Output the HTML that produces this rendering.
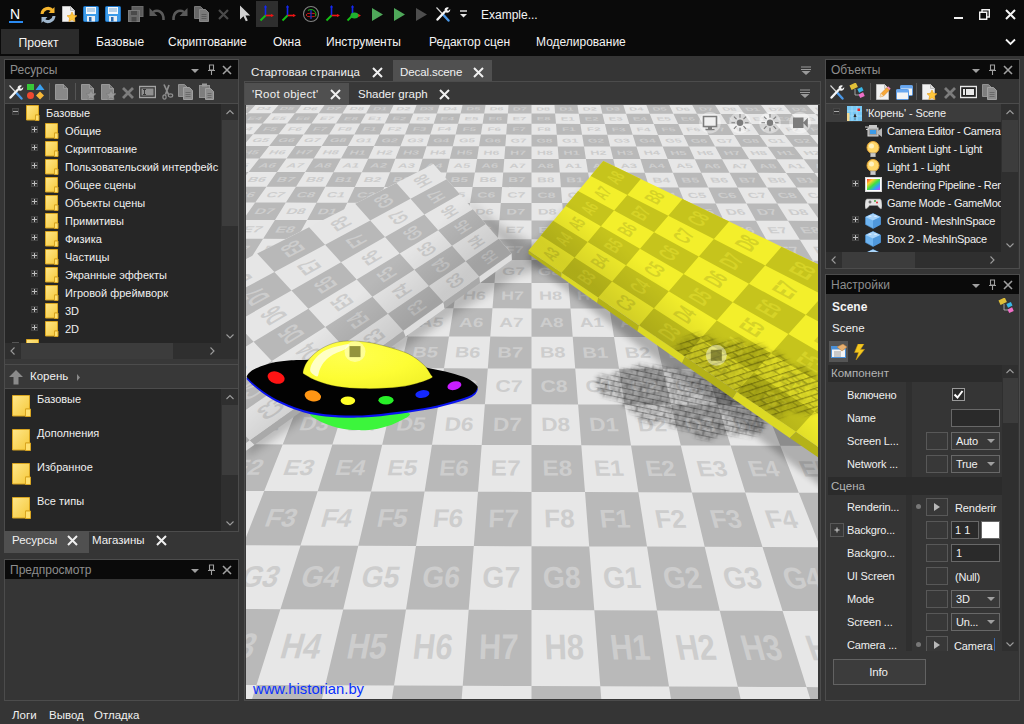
<!DOCTYPE html>
<html lang="ru"><head><meta charset="utf-8"><title>Example</title>
<style>
*{box-sizing:border-box;margin:0;padding:0}
html,body{width:1024px;height:724px;overflow:hidden;background:#353535}
body{font-family:"Liberation Sans",sans-serif;font-size:11px;color:#f0f0f0;position:relative}
.a{position:absolute}
.t{position:absolute;white-space:nowrap;line-height:1.15}
</style></head><body>
<svg width="0" height="0" style="position:absolute"><defs>
<linearGradient id="gf" x1="0" y1="0" x2="1" y2="1"><stop offset="0" stop-color="#ffe78a"/><stop offset="1" stop-color="#f5c83a"/></linearGradient>
<g id="folder"><path d="M0.5 0.5h12v9.5h-3v5h-9z" fill="url(#gf)" stroke="#d9a520" stroke-width="1"/><path d="M9.5 10h3.5v5.5h-3.5z" fill="#ffe070" stroke="#d9a520" stroke-width="1"/></g>
<g id="folderL"><path d="M0.5 0.5h17v13.5h-4v7h-13z" fill="url(#gf)" stroke="#d9a520"/><path d="M13.5 14h5v7.500h-5z" fill="#ffe070" stroke="#d9a520"/></g>
<g id="tx"><path d="M1 1l9 9M10 1l-9 9" stroke="#f0f0f0" stroke-width="2" fill="none"/></g>
<g id="hx"><path d="M1 1l8 8M9 1l-8 8" stroke="#a0a0a0" stroke-width="1.6" fill="none"/></g>
<g id="hpin"><path d="M2.500 1h4v5h-4zM1 6.500h7M4.500 6.500v4.500" stroke="#a0a0a0" stroke-width="1.1" fill="none"/></g>
<g id="hdd"><path d="M0 0h8l-4 4z" fill="#a0a0a0"/></g>
<g id="wrench"><path d="M1.500 1.500l7 7.500" stroke="#d8d8d8" stroke-width="1.100"/><path d="M8.500 9l5 5.500" stroke="#4a98e8" stroke-width="2.400" stroke-linecap="round"/><path d="M2.500 13.500l7.500-8" stroke="#f4f4f4" stroke-width="2.400" stroke-linecap="round"/><path d="M9.500 3.500a3 3 0 0 1 4.500-1.800l-2 2 1 1.300 2.200-1.700a3 3 0 0 1-4 3.300z" fill="#f4f4f4"/></g>
<g id="plus"><rect x="0.500" y="0.500" width="6" height="6" fill="#333" stroke="#464646"/><path d="M1 3.500h5M3.500 1v5" stroke="#bdbdbd" stroke-width="1"/></g>
<g id="minus"><rect x="0.500" y="0.500" width="6" height="6" fill="#333" stroke="#464646"/><path d="M1 3.500h5" stroke="#a8a8a8" stroke-width="1"/></g>
<g id="chevU"><path d="M1.500 6l3.500-3.500 3.500 3.500" stroke="#9c9c9c" stroke-width="1.100" fill="none"/></g>
<g id="chevD"><path d="M1.500 2.500l3.500 3.500 3.500-3.500" stroke="#9c9c9c" stroke-width="1.100" fill="none"/></g>
<g id="chevL"><path d="M5.500 1.500l-3.500 3.500 3.500 3.500" stroke="#9c9c9c" stroke-width="1.100" fill="none"/></g>
<g id="chevR"><path d="M2.500 1.500l3.500 3.500-3.500 3.500" stroke="#9c9c9c" stroke-width="1.100" fill="none"/></g>
<g id="doc"><path d="M1.500 0.500h8l4 4v11h-12z" fill="#f2f2f2" stroke="#bdbdbd"/><path d="M9.500 0.500v4h4" fill="#dcdcdc" stroke="#bdbdbd"/></g>
<g id="docg"><path d="M1.500 0.500h8l4 4v11h-12z" fill="#888" stroke="#989898"/><path d="M9.500 0.500v4h4" fill="#747474" stroke="#989898"/></g>
<g id="star"><path d="M5 0l1.500 3.300 3.500 0.400-2.600 2.400 0.700 3.500-3.100-1.800-3.100 1.800 0.700-3.500-2.600-2.400 3.500-0.400z" fill="#ffc83c" stroke="#e69a18" stroke-width="0.600"/></g>
<g id="starg"><path d="M5 0l1.500 3.300 3.500 0.400-2.600 2.400 0.700 3.500-3.100-1.800-3.100 1.800 0.700-3.500-2.600-2.400 3.500-0.400z" fill="#9a9a9a" stroke="#7a7a7a" stroke-width="0.600"/></g>
<g id="save"><rect x="0.500" y="0.500" width="15" height="15" rx="1" fill="#3c9be8" stroke="#1f74c4"/><rect x="3" y="1" width="10" height="7" fill="#f4f8fc"/><path d="M4 3h8M4 5h8" stroke="#7aa8d0" stroke-width="1"/><rect x="4" y="10" width="8" height="5.500" fill="#e8eef4"/><rect x="6" y="11" width="2.500" height="4.500" fill="#2a6cb0"/></g>
<g id="copyg"><path d="M0.500 0.500h6l3 3v9h-9z" fill="#7e7e7e" stroke="#929292"/><path d="M5.500 3.500h6l3 3v9h-9z" fill="#8c8c8c" stroke="#a0a0a0"/><path d="M7.500 8.500h5M7.500 10.500h5M7.500 12.500h5" stroke="#6a6a6a"/></g><g id="copyd"><path d="M0.500 0.500h6l3 3v9h-9z" fill="#666" stroke="#777"/><path d="M5.500 3.500h6l3 3v9h-9z" fill="#7a7a7a" stroke="#888"/><path d="M7.500 8.500h5M7.500 10.500h5M7.500 12.500h5" stroke="#5a5a5a"/></g>
<g id="xg"><path d="M2 2l10 10M12 2l-10 10" stroke="#7c7c7c" stroke-width="2.800"/></g>
<g id="rename"><rect x="0.500" y="2.500" width="16" height="11" fill="#222" stroke="#e8e8e8" stroke-width="1.400"/><rect x="3" y="5" width="11" height="6" fill="#e8e8e8"/><path d="M4 4.500h3M5.500 4.500v7M4 11.500h3" stroke="#222" stroke-width="1"/></g>
<g id="renameg"><rect x="0.500" y="2.500" width="16" height="11" fill="#3a3a3a" stroke="#a4a4a4" stroke-width="1.400"/><rect x="2.500" y="4.500" width="12" height="7" fill="#909090"/><path d="M4 5.500h3M5.500 5.500v5M4 10.500h3" stroke="#3a3a3a" stroke-width="1"/></g>
<g id="axes"><path d="M6.500 11V1" stroke="#1428f0" stroke-width="1.600"/><path d="M6.500 10.500h7" stroke="#f01414" stroke-width="1.600"/><path d="M6.500 10.500l-5 5" stroke="#14be14" stroke-width="2"/><path d="M15 10.500l-3-1.600v3.200z" fill="#f01414"/><path d="M6.500 0l-1.500 2.600h3z" fill="#1428f0"/></g>
<g id="play"><path d="M0 0l11 6.500-11 6.500z"/></g>
<g id="bulb"><circle cx="8" cy="6.500" r="6" fill="#ffd76a" stroke="#e8a838"/><circle cx="6.500" cy="5" r="2.500" fill="#fff2c0"/><rect x="5.500" y="12" width="5" height="4" fill="#c8c8c8" stroke="#8a8a8a" stroke-width="0.600"/></g>
<g id="cube"><path d="M8 0.500l7.500 3.500v7.500l-7.500 4-7.500-4v-7.500z" fill="#6eb4f0" stroke="#4a8ed0" stroke-width="0.600"/><path d="M8 0.500l7.500 3.500-7.500 3.500-7.500-3.500z" fill="#a8d4fa"/><path d="M8 7.500v8l7.500-4v-7.500z" fill="#4f98dc"/><ellipse cx="5" cy="3.300" rx="1.600" ry="0.800" fill="#d8ecff"/><ellipse cx="10.500" cy="3.300" rx="1.600" ry="0.800" fill="#d8ecff"/></g>
<g id="cam"><rect x="3" y="5" width="10" height="8" fill="#9a9a9a" stroke="#d8d8d8"/><rect x="5" y="7" width="6" height="4" fill="#3c9be8"/><path d="M13 8l4-3v9l-4-3z" fill="#b8b8b8"/><path d="M0 4h4M1 6.500h2" stroke="#d0d0d0"/><rect x="4" y="2" width="8" height="3" fill="#c8c8c8"/></g>
<g id="scene"><rect x="0" y="0" width="15" height="15" fill="#78c8f4"/><path d="M5 0v15M10 0v15M0 5h15M0 10h15" stroke="#a8dcf8" stroke-width="0.800"/><rect x="0" y="7" width="2.500" height="8" fill="#f4d890"/><rect x="10.500" y="2.500" width="2.500" height="2.500" fill="#f02020"/><path d="M6.500 11l1.500-3.500 1.500 3.500z" fill="#111"/><path d="M8 8v6" stroke="#555" stroke-width="0.700"/></g>
<g id="pipe"><rect x="0.500" y="0.500" width="16" height="14" fill="#fff" stroke="#d8d8d8"/><rect x="2" y="2" width="13" height="11" fill="url(#rb)"/></g>
<linearGradient id="rb" x1="0" y1="0" x2="1" y2="1"><stop offset="0" stop-color="#ff3030"/><stop offset="0.250" stop-color="#ffd030"/><stop offset="0.500" stop-color="#40e040"/><stop offset="0.750" stop-color="#30a0ff"/><stop offset="1" stop-color="#d040ff"/></linearGradient>
<g id="pad"><path d="M2 4h13c2 0 2.500 8 1.500 9.500-1 1-3-1.500-4-3h-8c-1 1.500-3 4-4 3C-0.500 12 0 4 2 4z" fill="#e4e4e4" stroke="#9a9a9a" stroke-width="0.600"/><circle cx="12" cy="7.500" r="1" fill="#e03030"/><circle cx="10" cy="6" r="0.900" fill="#30a030"/><path d="M3.500 7h3M5 5.500v3" stroke="#555" stroke-width="1.100"/></g>
<g id="shapes"><rect x="0" y="0" width="7" height="6" fill="#38c838"/><path d="M13 0l4.500 6h-9z" fill="#38a0f0"/><circle cx="3.500" cy="11.500" r="3.500" fill="#f04830"/><path d="M13 7.500l4 4-4 4-4-4z" fill="#f8b838"/></g>
<g id="link"><rect x="1" y="1" width="7" height="5" fill="#e0c038" transform="rotate(-25 4 3)"/><rect x="9" y="5" width="5" height="4" fill="#38b8e8" transform="rotate(-25 11 7)"/><rect x="10" y="10.500" width="5" height="4" fill="#f070c8" transform="rotate(-25 12 12)"/><path d="M6 6v6h4" stroke="#bbb" stroke-width="0.800" fill="none"/></g>
<g id="pencil"><path d="M6 13l1-3.500 6-6 2.500 2.500-6 6z" fill="#f8a838" stroke="#c87818" stroke-width="0.500"/><path d="M13 3.500l1.200-1.200 2.500 2.500-1.200 1.200z" fill="#f088b8"/><path d="M6 13l1-3.500 2.500 2.500z" fill="#f4e0c0"/></g>
<g id="wins"><rect x="4.500" y="0.500" width="12" height="10" rx="1" fill="#f4f4f4" stroke="#5a98e0"/><rect x="4.500" y="0.500" width="12" height="3" fill="#6aa8f0"/><rect x="0.500" y="4.500" width="12" height="10" rx="1" fill="#f4f4f4" stroke="#5a98e0"/><rect x="0.500" y="4.500" width="12" height="3" fill="#6aa8f0"/></g>
</defs></svg><div class="a" style="left:0px;top:0px;width:1024px;height:56px;background:#0a0a0a;"></div><div class="a" style="left:1px;top:29px;width:78px;height:25px;background:#2b2b2b;"></div><div class="t" style="left:-1.5px;top:35.5px;font-size:12.2px;color:#f4f4f4;width:80px;text-align:center">Проект</div><div class="t" style="left:96px;top:36px;font-size:12px;color:#f4f4f4;">Базовые</div><div class="t" style="left:168px;top:36px;font-size:12px;color:#f4f4f4;">Скриптование</div><div class="t" style="left:273px;top:36px;font-size:12px;color:#f4f4f4;">Окна</div><div class="t" style="left:326px;top:36px;font-size:12px;color:#f4f4f4;">Инструменты</div><div class="t" style="left:429px;top:36px;font-size:12px;color:#f4f4f4;">Редактор сцен</div><div class="t" style="left:536px;top:36px;font-size:12px;color:#f4f4f4;">Моделирование</div><svg class="a" style="left:1005px;top:38px" width="11" height="8" viewBox="0 0 11 8"><path d="M1 1.500l4.500 4.500 4.500-4.500" stroke="#f4f4f4" stroke-width="1.800" fill="none"/></svg><div class="t" style="left:10px;top:6px;font-size:14px;color:#ffffff;font-weight:normal">N</div><div class="a" style="left:9px;top:21px;width:14px;height:1.5px;background:#2a8af0;"></div><svg class="a" style="left:39px;top:6px" width="18" height="18" viewBox="0 0 18 18"><path d="M3 8a6 6 0 0 1 10.500-3.500" stroke="#f5b52e" stroke-width="3" fill="none"/><path d="M15.500 1v6h-6z" fill="#f5b52e"/><path d="M15 10a6 6 0 0 1-10.500 3.500" stroke="#9fb6cc" stroke-width="3" fill="none"/><path d="M2.500 17v-6h6z" fill="#9fb6cc"/></svg><svg class="a" style="left:61px;top:6px;" width="14" height="16" viewBox="0 0 14 16"><use href="#doc"/></svg><svg class="a" style="left:67px;top:12px;" width="10" height="10" viewBox="0 0 10 10"><use href="#star"/></svg><svg class="a" style="left:83px;top:6px;" width="16" height="16" viewBox="0 0 16 16"><use href="#save"/></svg><svg class="a" style="left:105px;top:6px;" width="16" height="16" viewBox="0 0 16 16"><use href="#save"/></svg><svg class="a" style="left:128px;top:6px" width="16" height="16" viewBox="0 0 16 16"><rect x="4" y="0.500" width="11" height="10" fill="#5c5c5c" stroke="#6c6c6c"/><rect x="0.500" y="4.500" width="11" height="11" fill="#6a6a6a" stroke="#7a7a7a"/><rect x="3" y="5" width="6" height="4" fill="#4a4a4a"/><rect x="3.500" y="11" width="5" height="4.500" fill="#4a4a4a"/></svg><svg class="a" style="left:149px;top:6px" width="17" height="16" viewBox="0 0 17 16"><path d="M4 6c5-3 11 0 10.500 8" stroke="#5a5a5a" stroke-width="2.600" fill="none"/><path d="M0.500 2v8h8z" fill="#5a5a5a"/></svg><svg class="a" style="left:171px;top:6px" width="17" height="16" viewBox="0 0 17 16"><path d="M13 6c-5-3-11 0-10.500 8" stroke="#5a5a5a" stroke-width="2.600" fill="none"/><path d="M16.500 2v8h-8z" fill="#5a5a5a"/></svg><svg class="a" style="left:194px;top:6px;" width="15" height="16" viewBox="0 0 15 16"><use href="#copyd"/></svg><svg class="a" style="left:217px;top:8px" width="13" height="13" viewBox="0 0 13 13"><path d="M2 2l9 9M11 2l-9 9" stroke="#4a4a4a" stroke-width="2.200"/></svg><svg class="a" style="left:239px;top:5px" width="12" height="17" viewBox="0 0 12 17"><path d="M1 0.500v14l3.500-3.200 2.300 5 2-0.900-2.300-4.900h4.700z" fill="#d0d0d0"/></svg><div class="a" style="left:256px;top:1px;width:22px;height:26px;background:#2e2e2e;"></div><svg class="a" style="left:259px;top:5px;" width="16" height="17" viewBox="0 0 16 17"><use href="#axes"/></svg><svg class="a" style="left:281px;top:5px;" width="16" height="17" viewBox="0 0 16 17"><use href="#axes"/></svg><svg class="a" style="left:302px;top:5px" width="18" height="18" viewBox="0 0 18 18"><circle cx="9" cy="9" r="7.500" stroke="#808080" stroke-width="1.100" fill="none"/><ellipse cx="9" cy="10" rx="5" ry="1.800" stroke="#c01818" stroke-width="1" fill="none"/><path d="M9 4v10" stroke="#1830d0" stroke-width="1.200"/><path d="M6 5.500a5 5 0 0 1 7.500 6" stroke="#18a018" stroke-width="1.100" fill="none"/></svg><svg class="a" style="left:325px;top:5px;" width="16" height="17" viewBox="0 0 16 17"><use href="#axes"/></svg><svg class="a" style="left:346px;top:5px;" width="16" height="17" viewBox="0 0 16 17"><use href="#axes"/></svg><svg class="a" style="left:350px;top:12px" width="9" height="7" viewBox="0 0 9 7"><ellipse cx="4.500" cy="3.500" rx="4" ry="3" fill="#20b030"/></svg><svg class="a" style="left:372px;top:8px;fill:#4fa85a" width="11" height="13" viewBox="0 0 11 13"><use href="#play"/></svg><svg class="a" style="left:394px;top:8px;fill:#4fa85a" width="11" height="13" viewBox="0 0 11 13"><use href="#play"/></svg><svg class="a" style="left:416px;top:8px;fill:#4e4e4e" width="11" height="13" viewBox="0 0 11 13"><use href="#play"/></svg><svg class="a" style="left:435px;top:6px;" width="16" height="16" viewBox="0 0 16 16"><use href="#wrench"/></svg><svg class="a" style="left:460px;top:10px" width="7" height="8" viewBox="0 0 7 8"><path d="M0 1h7" stroke="#e8e8e8" stroke-width="1.400"/><path d="M0 4h7l-3.500 3.500z" fill="#e8e8e8"/></svg><div class="t" style="left:481px;top:9px;font-size:12px;color:#f4f4f4;">Example...</div><div class="a" style="left:954px;top:17px;width:9px;height:1.5px;background:#f0f0f0;"></div><svg class="a" style="left:979px;top:9px" width="11" height="11" viewBox="0 0 11 11"><path d="M0.700 3.200h7v7h-7zM3 3V0.700h7.300v7.300H8" stroke="#f0f0f0" stroke-width="1.400" fill="none"/></svg><svg class="a" style="left:1005px;top:9px" width="11" height="11" viewBox="0 0 11 11"><path d="M1 1l9 9M10 1l-9 9" stroke="#f4f4f4" stroke-width="2"/></svg><div class="a" style="left:4px;top:59px;width:235px;height:473px;border:1px solid #4c4c4c;background:#383838;"></div><div class="a" style="left:5px;top:60px;width:233px;height:19px;background:#0a0a0a;"></div><div class="t" style="left:10px;top:63.5px;font-size:12px;color:#8e8e8e;">Ресурсы</div><svg class="a" style="left:191px;top:68.5px;" width="8" height="4" viewBox="0 0 8 4"><use href="#hdd"/></svg><svg class="a" style="left:207px;top:63.5px;" width="9" height="12" viewBox="0 0 9 12"><use href="#hpin"/></svg><svg class="a" style="left:222px;top:64.5px;" width="10" height="10" viewBox="0 0 10 10"><use href="#hx"/></svg><svg class="a" style="left:8px;top:84px;" width="16" height="16" viewBox="0 0 16 16"><use href="#wrench"/></svg><svg class="a" style="left:27px;top:84px;" width="18" height="16" viewBox="0 0 18 16"><use href="#shapes"/></svg><div class="a" style="left:49px;top:83px;width:1px;height:17px;background:#555;"></div><svg class="a" style="left:54px;top:84px;" width="14" height="16" viewBox="0 0 14 16"><use href="#docg"/></svg><div class="a" style="left:75px;top:83px;width:1px;height:17px;background:#555;"></div><svg class="a" style="left:80px;top:84px;" width="14" height="16" viewBox="0 0 14 16"><use href="#docg"/></svg><svg class="a" style="left:86px;top:90px;" width="10" height="10" viewBox="0 0 10 10"><use href="#starg"/></svg><svg class="a" style="left:100px;top:84px;" width="14" height="16" viewBox="0 0 14 16"><use href="#docg"/></svg><svg class="a" style="left:106px;top:90px;" width="10" height="10" viewBox="0 0 10 10"><use href="#starg"/></svg><svg class="a" style="left:121px;top:86px;" width="14" height="14" viewBox="0 0 14 14"><use href="#xg"/></svg><svg class="a" style="left:139px;top:84px;" width="17" height="16" viewBox="0 0 17 16"><use href="#renameg"/></svg><svg class="a" style="left:160px;top:84px" width="14" height="16" viewBox="0 0 14 16"><path d="M4 0.500l4.500 10M9 1l-3.500 9.500" stroke="#8e8e8e" stroke-width="1.700"/><ellipse cx="4.500" cy="13" rx="1.600" ry="2.200" stroke="#8e8e8e" stroke-width="1.200" fill="none"/><ellipse cx="10.500" cy="11.500" rx="2.200" ry="1.600" stroke="#8e8e8e" stroke-width="1.200" fill="none"/></svg><svg class="a" style="left:178px;top:84px;" width="15" height="16" viewBox="0 0 15 16"><use href="#copyg"/></svg><svg class="a" style="left:199px;top:83px" width="16" height="17" viewBox="0 0 16 17"><rect x="0.500" y="2.500" width="10" height="12" fill="#7e7e7e" stroke="#929292"/><rect x="3" y="0.500" width="5" height="3" fill="#9a9a9a"/><path d="M6.500 5.500h5l3 3v8h-8z" fill="#8c8c8c" stroke="#a0a0a0"/><path d="M8.500 10.500h4M8.500 12.500h4M8.500 14.500h4" stroke="#6a6a6a"/></svg><div class="a" style="left:5px;top:103px;width:233px;height:1px;background:#4c4c4c;"></div><div class="a" style="left:5px;top:104px;width:216px;height:239px;background:#262626;"></div><svg class="a" style="left:12px;top:108px;" width="8" height="8" viewBox="0 0 8 8"><use href="#minus"/></svg><svg class="a" style="left:26px;top:105px;" width="14" height="16" viewBox="0 0 14 16"><use href="#folder"/></svg><div class="t" style="left:46px;top:107px;font-size:11px;color:#f0f0f0;">Базовые</div><svg class="a" style="left:31px;top:126px;" width="8" height="8" viewBox="0 0 8 8"><use href="#plus"/></svg><svg class="a" style="left:45px;top:123px;" width="14" height="16" viewBox="0 0 14 16"><use href="#folder"/></svg><div class="t" style="left:65px;top:125px;font-size:11px;color:#f0f0f0;">Общие</div><svg class="a" style="left:31px;top:144px;" width="8" height="8" viewBox="0 0 8 8"><use href="#plus"/></svg><svg class="a" style="left:45px;top:141px;" width="14" height="16" viewBox="0 0 14 16"><use href="#folder"/></svg><div class="t" style="left:65px;top:143px;font-size:11px;color:#f0f0f0;">Скриптование</div><svg class="a" style="left:31px;top:162px;" width="8" height="8" viewBox="0 0 8 8"><use href="#plus"/></svg><svg class="a" style="left:45px;top:159px;" width="14" height="16" viewBox="0 0 14 16"><use href="#folder"/></svg><div class="t" style="left:65px;top:161px;font-size:11px;color:#f0f0f0;">Пользовательский интерфейс</div><svg class="a" style="left:31px;top:180px;" width="8" height="8" viewBox="0 0 8 8"><use href="#plus"/></svg><svg class="a" style="left:45px;top:177px;" width="14" height="16" viewBox="0 0 14 16"><use href="#folder"/></svg><div class="t" style="left:65px;top:179px;font-size:11px;color:#f0f0f0;">Общее сцены</div><svg class="a" style="left:31px;top:198px;" width="8" height="8" viewBox="0 0 8 8"><use href="#plus"/></svg><svg class="a" style="left:45px;top:195px;" width="14" height="16" viewBox="0 0 14 16"><use href="#folder"/></svg><div class="t" style="left:65px;top:197px;font-size:11px;color:#f0f0f0;">Объекты сцены</div><svg class="a" style="left:31px;top:216px;" width="8" height="8" viewBox="0 0 8 8"><use href="#plus"/></svg><svg class="a" style="left:45px;top:213px;" width="14" height="16" viewBox="0 0 14 16"><use href="#folder"/></svg><div class="t" style="left:65px;top:215px;font-size:11px;color:#f0f0f0;">Примитивы</div><svg class="a" style="left:31px;top:234px;" width="8" height="8" viewBox="0 0 8 8"><use href="#plus"/></svg><svg class="a" style="left:45px;top:231px;" width="14" height="16" viewBox="0 0 14 16"><use href="#folder"/></svg><div class="t" style="left:65px;top:233px;font-size:11px;color:#f0f0f0;">Физика</div><svg class="a" style="left:31px;top:252px;" width="8" height="8" viewBox="0 0 8 8"><use href="#plus"/></svg><svg class="a" style="left:45px;top:249px;" width="14" height="16" viewBox="0 0 14 16"><use href="#folder"/></svg><div class="t" style="left:65px;top:251px;font-size:11px;color:#f0f0f0;">Частицы</div><svg class="a" style="left:31px;top:270px;" width="8" height="8" viewBox="0 0 8 8"><use href="#plus"/></svg><svg class="a" style="left:45px;top:267px;" width="14" height="16" viewBox="0 0 14 16"><use href="#folder"/></svg><div class="t" style="left:65px;top:269px;font-size:11px;color:#f0f0f0;">Экранные эффекты</div><svg class="a" style="left:31px;top:288px;" width="8" height="8" viewBox="0 0 8 8"><use href="#plus"/></svg><svg class="a" style="left:45px;top:285px;" width="14" height="16" viewBox="0 0 14 16"><use href="#folder"/></svg><div class="t" style="left:65px;top:287px;font-size:11px;color:#f0f0f0;">Игровой фреймворк</div><svg class="a" style="left:31px;top:306px;" width="8" height="8" viewBox="0 0 8 8"><use href="#plus"/></svg><svg class="a" style="left:45px;top:303px;" width="14" height="16" viewBox="0 0 14 16"><use href="#folder"/></svg><div class="t" style="left:65px;top:305px;font-size:11px;color:#f0f0f0;">3D</div><svg class="a" style="left:31px;top:324px;" width="8" height="8" viewBox="0 0 8 8"><use href="#plus"/></svg><svg class="a" style="left:45px;top:321px;" width="14" height="16" viewBox="0 0 14 16"><use href="#folder"/></svg><div class="t" style="left:65px;top:323px;font-size:11px;color:#f0f0f0;">2D</div><div class="a" style="left:26px;top:339px;width:14px;height:4px;overflow:hidden"><svg class="a" style="left:0px;top:0px;" width="14" height="16" viewBox="0 0 14 16"><use href="#folder"/></svg></div><div class="a" style="left:12px;top:342px;width:7px;height:1px;background:#555;"></div><div class="a" style="left:221px;top:104px;width:17px;height:255px;background:#2f2f2f;"></div><svg class="a" style="left:225px;top:108px;" width="10" height="8" viewBox="0 0 10 8"><use href="#chevU"/></svg><div class="a" style="left:222px;top:120px;width:16px;height:106px;background:#3c3c3c;"></div><svg class="a" style="left:225px;top:332px;" width="10" height="8" viewBox="0 0 10 8"><use href="#chevD"/></svg><div class="a" style="left:5px;top:343px;width:216px;height:16px;background:#2f2f2f;"></div><div class="a" style="left:21px;top:343px;width:152px;height:16px;background:#3c3c3c;"></div><svg class="a" style="left:9px;top:346px;" width="8" height="10" viewBox="0 0 8 10"><use href="#chevL"/></svg><svg class="a" style="left:208px;top:346px;" width="8" height="10" viewBox="0 0 8 10"><use href="#chevR"/></svg><div class="a" style="left:5px;top:364px;width:233px;height:1px;background:#4c4c4c;"></div><svg class="a" style="left:9px;top:370px" width="14" height="15" viewBox="0 0 14 15"><path d="M7 0l7 7h-4.500v7.500h-5v-7.500h-4.500z" fill="#8a8a8a"/></svg><div class="t" style="left:30px;top:370px;font-size:11.5px;color:#f0f0f0;">Корень</div><svg class="a" style="left:76px;top:374px" width="5" height="7" viewBox="0 0 5 7"><path d="M1 0l3 3.500-3 3.500z" fill="#8a8a8a"/></svg><div class="a" style="left:5px;top:388px;width:233px;height:1px;background:#4c4c4c;"></div><div class="a" style="left:5px;top:389px;width:216px;height:142px;background:#262626;"></div><svg class="a" style="left:12px;top:395px;" width="19" height="22" viewBox="0 0 19 22"><use href="#folderL"/></svg><div class="t" style="left:37px;top:393px;font-size:11px;color:#f0f0f0;">Базовые</div><svg class="a" style="left:12px;top:429px;" width="19" height="22" viewBox="0 0 19 22"><use href="#folderL"/></svg><div class="t" style="left:37px;top:427px;font-size:11px;color:#f0f0f0;">Дополнения</div><svg class="a" style="left:12px;top:463px;" width="19" height="22" viewBox="0 0 19 22"><use href="#folderL"/></svg><div class="t" style="left:37px;top:461px;font-size:11px;color:#f0f0f0;">Избранное</div><svg class="a" style="left:12px;top:497px;" width="19" height="22" viewBox="0 0 19 22"><use href="#folderL"/></svg><div class="t" style="left:37px;top:495px;font-size:11px;color:#f0f0f0;">Все типы</div><div class="a" style="left:221px;top:389px;width:17px;height:142px;background:#2f2f2f;"></div><svg class="a" style="left:225px;top:393px;" width="10" height="8" viewBox="0 0 10 8"><use href="#chevU"/></svg><div class="a" style="left:222px;top:405px;width:16px;height:70px;background:#3c3c3c;"></div><svg class="a" style="left:225px;top:519px;" width="10" height="8" viewBox="0 0 10 8"><use href="#chevD"/></svg><div class="a" style="left:4px;top:531px;width:85px;height:22px;background:#505050;"></div><div class="t" style="left:12px;top:534px;font-size:11.5px;color:#f0f0f0;">Ресурсы</div><svg class="a" style="left:67px;top:535px;" width="11" height="11" viewBox="0 0 11 11"><use href="#tx"/></svg><div class="t" style="left:92px;top:534px;font-size:11.5px;color:#f0f0f0;">Магазины</div><svg class="a" style="left:156px;top:535px;" width="11" height="11" viewBox="0 0 11 11"><use href="#tx"/></svg><div class="a" style="left:4px;top:559px;width:235px;height:142px;border:1px solid #4c4c4c;background:#353535;"></div><div class="a" style="left:5px;top:560px;width:233px;height:19px;background:#0a0a0a;"></div><div class="t" style="left:10px;top:563.5px;font-size:12px;color:#8e8e8e;">Предпросмотр</div><svg class="a" style="left:191px;top:568.5px;" width="8" height="4" viewBox="0 0 8 4"><use href="#hdd"/></svg><svg class="a" style="left:207px;top:563.5px;" width="9" height="12" viewBox="0 0 9 12"><use href="#hpin"/></svg><svg class="a" style="left:222px;top:564.5px;" width="10" height="10" viewBox="0 0 10 10"><use href="#hx"/></svg><div class="t" style="left:12px;top:709px;font-size:11.5px;color:#f0f0f0;">Логи</div><div class="t" style="left:49px;top:709px;font-size:11.5px;color:#f0f0f0;">Вывод</div><div class="t" style="left:94px;top:709px;font-size:11.5px;color:#f0f0f0;">Отладка</div><div class="t" style="left:251px;top:66px;font-size:11.5px;color:#f0f0f0;">Стартовая страница</div><svg class="a" style="left:372px;top:66.5px;" width="11" height="11" viewBox="0 0 11 11"><use href="#tx"/></svg><div class="a" style="left:393px;top:60px;width:99px;height:21px;background:#505050;"></div><div class="t" style="left:400px;top:66px;font-size:11.5px;color:#f0f0f0;letter-spacing:-0.1px">Decal.scene</div><svg class="a" style="left:473px;top:66.5px;" width="11" height="11" viewBox="0 0 11 11"><use href="#tx"/></svg><svg class="a" style="left:801px;top:66px" width="10" height="9" viewBox="0 0 10 9"><path d="M0 1h10M0 3.500h10" stroke="#9a9a9a" stroke-width="1.200"/><path d="M0.500 5h9l-4.500 4z" fill="#9a9a9a"/></svg><div class="a" style="left:244px;top:81px;width:577px;height:620px;border:1px solid #4c4c4c;background:#383838;"></div><div class="a" style="left:245px;top:83px;width:104px;height:21px;background:#505050;"></div><div class="t" style="left:252px;top:88px;font-size:11.5px;color:#f0f0f0;letter-spacing:0.3px">'Root object'</div><svg class="a" style="left:330px;top:89px;" width="11" height="11" viewBox="0 0 11 11"><use href="#tx"/></svg><div class="t" style="left:358px;top:88px;font-size:11.5px;color:#f0f0f0;">Shader graph</div><svg class="a" style="left:439px;top:89px;" width="11" height="11" viewBox="0 0 11 11"><use href="#tx"/></svg><svg class="a" style="left:800px;top:89px" width="10" height="9" viewBox="0 0 10 9"><path d="M0 1h10M0 3.500h10" stroke="#9a9a9a" stroke-width="1.200"/><path d="M0.500 5h9l-4.500 4z" fill="#9a9a9a"/></svg><div class="a" style="left:245px;top:104px;width:575px;height:1px;background:#555;"></div><svg width="1024" height="724" viewBox="0 0 1024 724" style="position:absolute;left:0;top:0">
<defs><clipPath id="vp"><rect x="246" y="105" width="572" height="594"/></clipPath>
<filter id="b6" x="-30%" y="-30%" width="160%" height="160%"><feGaussianBlur stdDeviation="6"/></filter>
<filter id="b4" x="-30%" y="-30%" width="160%" height="160%"><feGaussianBlur stdDeviation="4"/></filter>
<filter id="b3" x="-30%" y="-30%" width="160%" height="160%"><feGaussianBlur stdDeviation="3"/></filter>
<filter id="rag" x="-20%" y="-40%" width="140%" height="180%"><feTurbulence type="fractalNoise" baseFrequency="0.060" numOctaves="3" seed="5"/><feDisplacementMap in="SourceGraphic" scale="18" xChannelSelector="R" yChannelSelector="G"/><feGaussianBlur stdDeviation="2.200"/></filter><filter id="nz" x="0" y="0" width="100%" height="100%"><feTurbulence type="fractalNoise" baseFrequency="0.180" numOctaves="2" seed="8"/><feColorMatrix type="matrix" values="0 0 0 0 0 0 0 0 0 0 0 0 0 0 0 1.300 0 0 0 -0.450"/></filter><pattern id="brk" width="14" height="10" patternUnits="userSpaceOnUse"><path d="M0 0.500h14M0 5.500h14M3 0v5M10 5v5" stroke="#000" stroke-opacity="0.300" stroke-width="1" fill="none"/></pattern><pattern id="brk2" width="20" height="12" patternUnits="userSpaceOnUse"><path d="M0 0.500h20M0 6.500h20M4 0v6M14 6v6" stroke="#303000" stroke-opacity="0.400" stroke-width="1.200" fill="none"/></pattern><mask id="dm1" maskUnits="userSpaceOnUse" x="560" y="300" width="300" height="180"><path d="M600 382L640 372L700 380L762 418L750 432L700 428L650 412Z" stroke="#fff" stroke-width="14" stroke-linejoin="round" fill="#fff" filter="url(#rag)"/></mask><mask id="dm2" maskUnits="userSpaceOnUse" x="600" y="300" width="260" height="180"><path d="M672 352L700 338L760 352L818 380L818 405L780 412L720 385Z" stroke="#fff" stroke-width="10" stroke-linejoin="round" fill="#fff" filter="url(#rag)"/></mask><radialGradient id="domeg" cx="0.350" cy="0.300" r="0.800"><stop offset="0" stop-color="#ffff50"/><stop offset="0.600" stop-color="#fdfd34"/><stop offset="1" stop-color="#f2f22a"/></radialGradient>
</defs>
<style>.lb text{font-family:"Liberation Sans",sans-serif;font-weight:bold;font-size:47px;text-anchor:middle}</style>
<g clip-path="url(#vp)">
<rect x="246" y="105" width="572" height="594" fill="#e7e7e7"/>
<path fill="#b9b9b9" d="M227.5 776.7 303.5 777 325.2 685.2 256.5 685ZM379.5 777.4 455.5 777.7 462.7 685.8 394 685.5ZM531.5 778 607.5 778.3 600.3 686.3 531.5 686ZM683.5 778.6 759.5 779 737.8 686.8 669 686.5ZM835.5 779.3 911.5 779.6 875.3 687.3 806.5 687.1ZM187.7 684.7 256.5 685 280.4 609.2 217.7 609ZM325.2 685.2 394 685.5 406 609.6 343.2 609.4ZM462.7 685.8 531.5 686 531.5 610.1 468.7 609.8ZM600.3 686.3 669 686.5 657 610.5 594.3 610.3ZM737.8 686.8 806.5 687.1 782.6 610.9 719.8 610.7ZM280.4 609.2 343.2 609.4 358.3 545.7 300.5 545.5ZM406 609.6 468.7 609.8 473.8 546.1 416 545.9ZM531.5 610.1 594.3 610.3 589.2 546.4 531.5 546.3ZM657 610.5 719.8 610.7 704.7 546.8 647 546.6ZM782.6 610.9 845.3 611.2 820.2 547.2 762.5 547ZM242.8 545.3 300.5 545.5 317.7 491.3 264.2 491.1ZM358.3 545.7 416 545.9 424.6 491.6 371.1 491.5ZM473.8 546.1 531.5 546.3 531.5 491.9 478 491.8ZM589.2 546.4 647 546.6 638.4 492.2 585 492.1ZM704.7 546.8 762.5 547 745.3 492.6 691.9 492.4ZM820.2 547.2 877.9 547.4 852.3 492.9 798.8 492.7ZM210.7 491 264.2 491.1 282.7 444.4 232.9 444.3ZM317.7 491.3 371.1 491.5 382.2 444.7 332.4 444.5ZM424.6 491.6 478 491.8 481.7 445 432 444.8ZM531.5 491.9 585 492.1 581.3 445.2 531.5 445.1ZM638.4 492.2 691.9 492.4 680.8 445.5 631 445.4ZM745.3 492.6 798.8 492.7 780.3 445.8 730.6 445.6ZM183.1 444.1 232.9 444.3 252.2 403.6 205.6 403.5ZM282.7 444.4 332.4 444.5 345.3 403.8 298.7 403.7ZM382.2 444.7 432 444.8 438.4 404.1 391.8 403.9ZM481.7 445 531.5 445.1 531.5 404.3 484.9 404.2ZM581.3 445.2 631 445.4 624.6 404.5 578.1 404.4ZM680.8 445.5 730.6 445.6 717.7 404.8 671.2 404.7ZM780.3 445.8 830.1 445.9 810.8 405 764.3 404.9ZM252.2 403.6 298.7 403.7 312.8 367.9 269.1 367.8ZM345.3 403.8 391.8 403.9 400.3 368.2 356.6 368ZM438.4 404.1 484.9 404.2 487.8 368.4 444 368.3ZM531.5 404.3 578.1 404.4 575.2 368.6 531.5 368.5ZM624.6 404.5 671.2 404.7 662.7 368.8 619 368.7ZM717.7 404.8 764.3 404.9 750.2 369 706.4 368.9ZM810.8 405 857.4 405.1 837.6 369.2 793.9 369.1ZM225.4 367.7 269.1 367.8 284.1 336.2 242.9 336.1ZM312.8 367.9 356.6 368 366.6 336.4 325.3 336.3ZM400.3 368.2 444 368.3 449 336.5 407.8 336.4ZM487.8 368.4 531.5 368.5 531.5 336.7 490.3 336.6ZM575.2 368.6 619 368.7 614 336.9 572.7 336.8ZM662.7 368.8 706.4 368.9 696.4 337.1 655.2 337ZM750.2 369 793.9 369.1 778.9 337.3 737.7 337.2ZM201.7 336 242.9 336.1 258.5 307.8 219.5 307.8ZM284.1 336.2 325.3 336.3 336.5 308 297.5 307.9ZM366.6 336.4 407.8 336.4 414.5 308.2 375.5 308.1ZM449 336.5 490.3 336.6 492.5 308.3 453.5 308.3ZM531.5 336.7 572.7 336.8 570.5 308.5 531.5 308.4ZM614 336.9 655.2 337 648.5 308.7 609.5 308.6ZM696.4 337.1 737.7 337.2 726.5 308.8 687.5 308.8ZM778.9 337.3 820.1 337.4 804.5 309 765.5 308.9ZM258.5 307.8 297.5 307.9 309.5 282.6 272.5 282.5ZM336.5 308 375.5 308.1 383.5 282.7 346.5 282.6ZM414.5 308.2 453.5 308.3 457.5 282.9 420.5 282.8ZM492.5 308.3 531.5 308.4 531.5 283 494.5 283ZM570.5 308.5 609.5 308.6 605.5 283.2 568.5 283.1ZM648.5 308.7 687.5 308.8 679.5 283.3 642.5 283.3ZM726.5 308.8 765.5 308.9 753.5 283.5 716.5 283.4ZM804.5 309 843.5 309.1 827.5 283.6 790.5 283.6ZM235.5 282.4 272.5 282.5 285.2 259.6 250 259.6ZM309.5 282.6 346.5 282.6 355.5 259.8 320.3 259.7ZM383.5 282.7 420.5 282.8 425.9 259.9 390.7 259.8ZM457.5 282.9 494.5 283 496.3 260 461.1 260ZM531.5 283 568.5 283.1 566.7 260.2 531.5 260.1ZM605.5 283.2 642.5 283.3 637.1 260.3 601.9 260.2ZM679.5 283.3 716.5 283.4 707.5 260.5 672.3 260.4ZM753.5 283.5 790.5 283.6 777.8 260.6 742.7 260.5ZM827.5 283.6 864.5 283.7 848.2 260.7 813 260.7ZM214.8 259.5 250 259.6 263.1 238.8 229.5 238.8ZM285.2 259.6 320.3 259.7 330.2 238.9 296.6 238.9ZM355.5 259.8 390.7 259.8 397.3 239.1 363.7 239ZM425.9 259.9 461.1 260 464.4 239.2 430.8 239.1ZM496.3 260 531.5 260.1 531.5 239.3 497.9 239.3ZM566.7 260.2 601.9 260.2 598.6 239.4 565.1 239.4ZM637.1 260.3 672.3 260.4 665.7 239.6 632.2 239.5ZM707.5 260.5 742.7 260.5 732.8 239.7 699.3 239.6ZM777.8 260.6 813 260.7 799.9 239.8 766.4 239.8ZM263.1 238.8 296.6 238.9 307.1 220 275 219.9ZM330.2 238.9 363.7 239 371.2 220.1 339.1 220ZM397.3 239.1 430.8 239.1 435.3 220.2 403.3 220.2ZM464.4 239.2 497.9 239.3 499.4 220.3 467.4 220.3ZM531.5 239.3 565.1 239.4 563.6 220.4 531.5 220.4ZM598.6 239.4 632.2 239.5 627.7 220.6 595.6 220.5ZM665.7 239.6 699.3 239.6 691.8 220.7 659.7 220.6ZM732.8 239.7 766.4 239.8 755.9 220.8 723.9 220.7ZM799.9 239.8 833.5 239.9 820.1 220.9 788 220.8ZM242.9 219.9 275 219.9 285.9 202.6 255.2 202.6ZM307.1 220 339.1 220 347.3 202.7 316.6 202.7ZM371.2 220.1 403.3 220.2 408.7 202.9 378 202.8ZM435.3 220.2 467.4 220.3 470.1 203 439.4 202.9ZM499.4 220.3 531.5 220.4 531.5 203.1 500.8 203ZM563.6 220.4 595.6 220.5 592.9 203.2 562.2 203.1ZM627.7 220.6 659.7 220.6 654.3 203.3 623.6 203.2ZM691.8 220.7 723.9 220.7 715.7 203.4 685 203.3ZM755.9 220.8 788 220.8 777.1 203.5 746.4 203.4ZM820.1 220.9 852.1 221 838.5 203.6 807.8 203.5ZM224.5 202.5 255.2 202.6 266.5 186.7 237.1 186.7ZM285.9 202.6 316.6 202.7 325.4 186.8 296 186.8ZM347.3 202.7 378 202.8 384.3 186.9 354.8 186.9ZM408.7 202.9 439.4 202.9 443.2 187 413.7 187ZM470.1 203 500.8 203 502.1 187.1 472.6 187.1ZM531.5 203.1 562.2 203.1 560.9 187.2 531.5 187.2ZM592.9 203.2 623.6 203.2 619.8 187.3 590.4 187.2ZM654.3 203.3 685 203.3 678.7 187.4 649.3 187.3ZM715.7 203.4 746.4 203.4 737.6 187.5 708.2 187.4ZM777.1 203.5 807.8 203.5 796.5 187.6 767 187.5ZM207.6 186.6 237.1 186.7 248.6 172 220.3 172ZM266.5 186.7 296 186.8 305.2 172.1 276.9 172.1ZM325.4 186.8 354.8 186.9 361.8 172.2 333.5 172.2ZM384.3 186.9 413.7 187 418.3 172.3 390.1 172.3ZM443.2 187 472.6 187.1 474.9 172.4 446.6 172.4ZM502.1 187.1 531.5 187.2 531.5 172.5 503.2 172.4ZM560.9 187.2 590.4 187.2 588.1 172.6 559.8 172.5ZM619.8 187.3 649.3 187.3 644.7 172.7 616.4 172.6ZM678.7 187.4 708.2 187.4 701.2 172.8 672.9 172.7ZM737.6 187.5 767 187.5 757.8 172.8 729.5 172.8ZM796.5 187.6 825.9 187.6 814.4 172.9 786.1 172.9ZM248.6 172 276.9 172.1 286.5 158.6 259.3 158.5ZM305.2 172.1 333.5 172.2 341 158.6 313.7 158.6ZM361.8 172.2 390.1 172.3 395.4 158.7 368.2 158.7ZM418.3 172.3 446.6 172.4 449.8 158.8 422.6 158.8ZM474.9 172.4 503.2 172.4 504.3 158.9 477.1 158.9ZM531.5 172.5 559.8 172.5 558.7 159 531.5 158.9ZM588.1 172.6 616.4 172.6 613.2 159.1 585.9 159ZM644.7 172.7 672.9 172.7 667.6 159.1 640.4 159.1ZM701.2 172.8 729.5 172.8 722 159.2 694.8 159.2ZM757.8 172.8 786.1 172.9 776.5 159.3 749.3 159.3ZM814.4 172.9 842.7 173 830.9 159.4 803.7 159.3ZM232.1 158.5 259.3 158.5 269.2 146 243 145.9ZM286.5 158.6 313.7 158.6 321.7 146.1 295.4 146ZM341 158.6 368.2 158.7 374.1 146.1 347.9 146.1ZM395.4 158.7 422.6 158.8 426.6 146.2 400.4 146.2ZM449.8 158.8 477.1 158.9 479 146.3 452.8 146.3ZM504.3 158.9 531.5 158.9 531.5 146.4 505.3 146.3ZM558.7 159 585.9 159 584 146.4 557.7 146.4ZM613.2 159.1 640.4 159.1 636.4 146.5 610.2 146.5ZM667.6 159.1 694.8 159.2 688.9 146.6 662.6 146.6ZM722 159.2 749.3 159.3 741.3 146.7 715.1 146.6ZM776.5 159.3 803.7 159.3 793.8 146.7 767.6 146.7ZM216.7 145.9 243 145.9 253.1 134.3 227.8 134.3ZM269.2 146 295.4 146 303.7 134.4 278.4 134.3ZM321.7 146.1 347.9 146.1 354.3 134.4 329 134.4ZM374.1 146.1 400.4 146.2 405 134.5 379.6 134.5ZM426.6 146.2 452.8 146.3 455.6 134.6 430.3 134.5ZM479 146.3 505.3 146.3 506.2 134.6 480.9 134.6ZM531.5 146.4 557.7 146.4 556.8 134.7 531.5 134.7ZM584 146.4 610.2 146.5 607.4 134.8 582.1 134.8ZM636.4 146.5 662.6 146.6 658 134.9 632.7 134.8ZM688.9 146.6 715.1 146.6 708.7 134.9 683.4 134.9ZM741.3 146.7 767.6 146.7 759.3 135 734 135ZM793.8 146.7 820 146.8 809.9 135.1 784.6 135ZM253.1 134.3 278.4 134.3 287 123.5 262.5 123.4ZM303.7 134.4 329 134.4 335.9 123.5 311.4 123.5ZM354.3 134.4 379.6 134.5 384.8 123.6 360.3 123.6ZM405 134.5 430.3 134.5 433.7 123.7 409.2 123.6ZM455.6 134.6 480.9 134.6 482.6 123.7 458.1 123.7ZM506.2 134.6 531.5 134.7 531.5 123.8 507 123.8ZM556.8 134.7 582.1 134.8 580.4 123.9 556 123.8ZM607.4 134.8 632.7 134.8 629.3 123.9 604.9 123.9ZM658 134.9 683.4 134.9 678.2 124 653.8 124ZM708.7 134.9 734 135 727.1 124.1 702.7 124ZM759.3 135 784.6 135 776 124.1 751.6 124.1ZM809.9 135.1 835.2 135.1 824.9 124.2 800.5 124.2ZM238.1 123.4 262.5 123.4 271.4 113.3 247.7 113.2ZM287 123.5 311.4 123.5 318.7 113.3 295 113.3ZM335.9 123.5 360.3 123.6 366 113.4 342.3 113.4ZM384.8 123.6 409.2 123.6 413.3 113.5 389.6 113.4ZM433.7 123.7 458.1 123.7 460.6 113.5 436.9 113.5ZM482.6 123.7 507 123.8 507.9 113.6 484.2 113.5ZM531.5 123.8 556 123.8 555.1 113.6 531.5 113.6ZM580.4 123.9 604.9 123.9 602.4 113.7 578.8 113.7ZM629.3 123.9 653.8 124 649.7 113.8 626.1 113.7ZM678.2 124 702.7 124 697 113.8 673.4 113.8ZM727.1 124.1 751.6 124.1 744.3 113.9 720.7 113.9ZM776 124.1 800.5 124.2 791.6 114 768 113.9ZM824.9 124.2 849.4 124.2 838.9 114 815.3 114ZM224.1 113.2 247.7 113.2 256.7 103.7 233.8 103.7ZM271.4 113.3 295 113.3 302.5 103.8 279.6 103.8ZM318.7 113.3 342.3 113.4 348.3 103.8 325.4 103.8ZM366 113.4 389.6 113.4 394.1 103.9 371.2 103.9ZM413.3 113.5 436.9 113.5 439.9 104 417 103.9ZM460.6 113.5 484.2 113.5 485.7 104 462.8 104ZM507.9 113.6 531.5 113.6 531.5 104.1 508.6 104.1ZM555.1 113.6 578.8 113.7 577.3 104.1 554.4 104.1ZM602.4 113.7 626.1 113.7 623.1 104.2 600.2 104.2ZM649.7 113.8 673.4 113.8 668.9 104.3 646 104.2ZM697 113.8 720.7 113.9 714.7 104.3 691.8 104.3ZM744.3 113.9 768 113.9 760.5 104.4 737.6 104.3ZM791.6 114 815.3 114 806.3 104.4 783.4 104.4ZM256.7 103.7 279.6 103.8 287.4 94.8 265.2 94.8ZM302.5 103.8 325.4 103.8 331.8 94.9 309.6 94.9ZM348.3 103.8 371.2 103.9 376.2 94.9 354 94.9ZM394.1 103.9 417 103.9 420.5 95 398.3 95ZM439.9 104 462.8 104 464.9 95.1 442.7 95ZM485.7 104 508.6 104.1 509.3 95.1 487.1 95.1ZM531.5 104.1 554.4 104.1 553.7 95.2 531.5 95.1ZM577.3 104.1 600.2 104.2 598.1 95.2 575.9 95.2ZM623.1 104.2 646 104.2 642.5 95.3 620.3 95.2ZM668.9 104.3 691.8 104.3 686.8 95.3 664.7 95.3ZM714.7 104.3 737.6 104.3 731.2 95.4 709 95.4ZM760.5 104.4 783.4 104.4 775.6 95.4 753.4 95.4ZM806.3 104.4 829.2 104.5 820 95.5 797.8 95.5Z"/>
<g class="lb" fill="#cdcdcd"><text transform="matrix(0.7220 0.0029 -0.3256 0.9155 206.6 728.4)" y="17">A3</text><text transform="matrix(0.7220 0.0029 -0.2532 0.9161 278.8 728.7)" y="17">A4</text><text transform="matrix(0.7220 0.0029 -0.1809 0.9166 351.0 729.0)" y="17">A5</text><text transform="matrix(0.7220 0.0029 -0.1085 0.9172 423.2 729.3)" y="17">A6</text><text transform="matrix(0.7220 0.0029 -0.0362 0.9178 495.4 729.6)" y="17">A7</text><text transform="matrix(0.7220 0.0029 0.0362 0.9184 567.6 729.9)" y="17">A8</text><text transform="matrix(0.7220 0.0029 0.1085 0.9190 639.8 730.1)" y="17">A1</text><text transform="matrix(0.7220 0.0029 0.1809 0.9195 712.0 730.4)" y="17">A2</text><text transform="matrix(0.7220 0.0029 0.2532 0.9201 784.2 730.7)" y="17">A3</text><text transform="matrix(0.7220 0.0029 0.3256 0.9207 856.4 731.0)" y="17">A4</text><text transform="matrix(0.6563 0.0024 -0.2690 0.7565 236.2 645.2)" y="17">H3</text><text transform="matrix(0.6563 0.0024 -0.2092 0.7570 301.8 645.5)" y="17">H4</text><text transform="matrix(0.6563 0.0024 -0.1494 0.7574 367.4 645.7)" y="17">H5</text><text transform="matrix(0.6563 0.0024 -0.0897 0.7578 433.1 646.0)" y="17">H6</text><text transform="matrix(0.6563 0.0024 -0.0299 0.7583 498.7 646.2)" y="17">H7</text><text transform="matrix(0.6563 0.0024 0.0299 0.7587 564.3 646.4)" y="17">H8</text><text transform="matrix(0.6563 0.0024 0.0897 0.7591 629.9 646.7)" y="17">H1</text><text transform="matrix(0.6563 0.0024 0.1494 0.7596 695.6 646.9)" y="17">H2</text><text transform="matrix(0.6563 0.0024 0.2092 0.7600 761.2 647.1)" y="17">H3</text><text transform="matrix(0.6563 0.0024 0.2690 0.7604 826.8 647.4)" y="17">H4</text><text transform="matrix(0.6015 0.0020 -0.2259 0.6356 260.8 575.9)" y="17">G3</text><text transform="matrix(0.6015 0.0020 -0.1757 0.6360 321.0 576.1)" y="17">G4</text><text transform="matrix(0.6015 0.0020 -0.1255 0.6363 381.1 576.3)" y="17">G5</text><text transform="matrix(0.6015 0.0020 -0.0753 0.6366 441.3 576.5)" y="17">G6</text><text transform="matrix(0.6015 0.0020 -0.0251 0.6370 501.4 576.7)" y="17">G7</text><text transform="matrix(0.6015 0.0020 0.0251 0.6373 561.6 576.9)" y="17">G8</text><text transform="matrix(0.6015 0.0020 0.0753 0.6376 621.7 577.1)" y="17">G1</text><text transform="matrix(0.6015 0.0020 0.1255 0.6380 681.9 577.3)" y="17">G2</text><text transform="matrix(0.6015 0.0020 0.1757 0.6383 742.0 577.5)" y="17">G3</text><text transform="matrix(0.6015 0.0020 0.2259 0.6386 802.2 577.7)" y="17">G4</text><text transform="matrix(0.5552 0.0017 -0.2352 0.5413 226.1 517.1)" y="17">F2</text><text transform="matrix(0.5552 0.0017 -0.1925 0.5416 281.7 517.3)" y="17">F3</text><text transform="matrix(0.5552 0.0017 -0.1497 0.5418 337.2 517.5)" y="17">F4</text><text transform="matrix(0.5552 0.0017 -0.1069 0.5421 392.7 517.6)" y="17">F5</text><text transform="matrix(0.5552 0.0017 -0.0642 0.5424 448.2 517.8)" y="17">F6</text><text transform="matrix(0.5552 0.0017 -0.0214 0.5426 503.7 518.0)" y="17">F7</text><text transform="matrix(0.5552 0.0017 0.0214 0.5429 559.3 518.1)" y="17">F8</text><text transform="matrix(0.5552 0.0017 0.0642 0.5431 614.8 518.3)" y="17">F1</text><text transform="matrix(0.5552 0.0017 0.1069 0.5434 670.3 518.5)" y="17">F2</text><text transform="matrix(0.5552 0.0017 0.1497 0.5437 725.8 518.6)" y="17">F3</text><text transform="matrix(0.5552 0.0017 0.1925 0.5439 781.3 518.8)" y="17">F4</text><text transform="matrix(0.5552 0.0017 0.2352 0.5442 836.9 519.0)" y="17">F5</text><text transform="matrix(0.5155 0.0015 -0.2028 0.4667 248.0 466.9)" y="17">E2</text><text transform="matrix(0.5155 0.0015 -0.1659 0.4669 299.5 467.0)" y="17">E3</text><text transform="matrix(0.5155 0.0015 -0.1290 0.4672 351.1 467.2)" y="17">E4</text><text transform="matrix(0.5155 0.0015 -0.0922 0.4674 402.6 467.3)" y="17">E5</text><text transform="matrix(0.5155 0.0015 -0.0553 0.4676 454.2 467.5)" y="17">E6</text><text transform="matrix(0.5155 0.0015 -0.0184 0.4678 505.7 467.6)" y="17">E7</text><text transform="matrix(0.5155 0.0015 0.0184 0.4680 557.3 467.7)" y="17">E8</text><text transform="matrix(0.5155 0.0015 0.0553 0.4682 608.8 467.9)" y="17">E1</text><text transform="matrix(0.5155 0.0015 0.0922 0.4684 660.4 468.0)" y="17">E2</text><text transform="matrix(0.5155 0.0015 0.1290 0.4686 711.9 468.2)" y="17">E3</text><text transform="matrix(0.5155 0.0015 0.1659 0.4688 763.5 468.3)" y="17">E4</text><text transform="matrix(0.5155 0.0015 0.2028 0.4690 815.0 468.5)" y="17">E5</text><text transform="matrix(0.4811 0.0013 -0.2087 0.4064 218.8 423.2)" y="17">D1</text><text transform="matrix(0.4811 0.0013 -0.1766 0.4066 266.9 423.3)" y="17">D2</text><text transform="matrix(0.4811 0.0013 -0.1445 0.4067 315.0 423.4)" y="17">D3</text><text transform="matrix(0.4811 0.0013 -0.1124 0.4069 363.1 423.6)" y="17">D4</text><text transform="matrix(0.4811 0.0013 -0.0803 0.4071 411.2 423.7)" y="17">D5</text><text transform="matrix(0.4811 0.0013 -0.0482 0.4073 459.3 423.8)" y="17">D6</text><text transform="matrix(0.4811 0.0013 -0.0161 0.4074 507.4 424.0)" y="17">D7</text><text transform="matrix(0.4811 0.0013 0.0161 0.4076 555.6 424.1)" y="17">D8</text><text transform="matrix(0.4811 0.0013 0.0482 0.4078 603.7 424.2)" y="17">D1</text><text transform="matrix(0.4811 0.0013 0.0803 0.4079 651.8 424.3)" y="17">D2</text><text transform="matrix(0.4811 0.0013 0.1124 0.4081 699.9 424.5)" y="17">D3</text><text transform="matrix(0.4811 0.0013 0.1445 0.4083 748.0 424.6)" y="17">D4</text><text transform="matrix(0.4811 0.0013 0.1766 0.4085 796.1 424.7)" y="17">D5</text><text transform="matrix(0.4811 0.0013 0.2087 0.4086 844.2 424.9)" y="17">D6</text><text transform="matrix(0.4510 0.0011 -0.1834 0.3572 238.4 385.1)" y="17">C1</text><text transform="matrix(0.4510 0.0011 -0.1552 0.3573 283.5 385.2)" y="17">C2</text><text transform="matrix(0.4510 0.0011 -0.1270 0.3575 328.6 385.3)" y="17">C3</text><text transform="matrix(0.4510 0.0011 -0.0988 0.3576 373.7 385.4)" y="17">C4</text><text transform="matrix(0.4510 0.0011 -0.0705 0.3578 418.8 385.5)" y="17">C5</text><text transform="matrix(0.4510 0.0011 -0.0423 0.3579 463.9 385.7)" y="17">C6</text><text transform="matrix(0.4510 0.0011 -0.0141 0.3580 509.0 385.8)" y="17">C7</text><text transform="matrix(0.4510 0.0011 0.0141 0.3582 554.0 385.9)" y="17">C8</text><text transform="matrix(0.4510 0.0011 0.0423 0.3583 599.1 386.0)" y="17">C1</text><text transform="matrix(0.4510 0.0011 0.0705 0.3585 644.2 386.1)" y="17">C2</text><text transform="matrix(0.4510 0.0011 0.0988 0.3586 689.3 386.2)" y="17">C3</text><text transform="matrix(0.4510 0.0011 0.1270 0.3587 734.4 386.3)" y="17">C4</text><text transform="matrix(0.4510 0.0011 0.1552 0.3589 779.5 386.4)" y="17">C5</text><text transform="matrix(0.4510 0.0011 0.1834 0.3590 824.6 386.6)" y="17">C6</text><text transform="matrix(0.4244 0.0010 -0.1625 0.3164 255.6 351.5)" y="17">B1</text><text transform="matrix(0.4244 0.0010 -0.1375 0.3165 298.1 351.6)" y="17">B2</text><text transform="matrix(0.4244 0.0010 -0.1125 0.3166 340.5 351.7)" y="17">B3</text><text transform="matrix(0.4244 0.0010 -0.0875 0.3168 382.9 351.8)" y="17">B4</text><text transform="matrix(0.4244 0.0010 -0.0625 0.3169 425.4 351.9)" y="17">B5</text><text transform="matrix(0.4244 0.0010 -0.0375 0.3170 467.8 352.0)" y="17">B6</text><text transform="matrix(0.4244 0.0010 -0.0125 0.3171 510.3 352.1)" y="17">B7</text><text transform="matrix(0.4244 0.0010 0.0125 0.3172 552.7 352.2)" y="17">B8</text><text transform="matrix(0.4244 0.0010 0.0375 0.3174 595.2 352.3)" y="17">B1</text><text transform="matrix(0.4244 0.0010 0.0625 0.3175 637.6 352.4)" y="17">B2</text><text transform="matrix(0.4244 0.0010 0.0875 0.3176 680.1 352.5)" y="17">B3</text><text transform="matrix(0.4244 0.0010 0.1125 0.3177 722.5 352.6)" y="17">B4</text><text transform="matrix(0.4244 0.0010 0.1375 0.3178 764.9 352.7)" y="17">B5</text><text transform="matrix(0.4244 0.0010 0.1625 0.3179 807.4 352.8)" y="17">B6</text><text transform="matrix(0.4008 0.0009 -0.1672 0.2821 230.9 321.5)" y="17">A8</text><text transform="matrix(0.4008 0.0009 -0.1449 0.2822 271.0 321.6)" y="17">A1</text><text transform="matrix(0.4008 0.0009 -0.1226 0.2823 311.0 321.7)" y="17">A2</text><text transform="matrix(0.4008 0.0009 -0.1003 0.2824 351.1 321.8)" y="17">A3</text><text transform="matrix(0.4008 0.0009 -0.0780 0.2825 391.2 321.9)" y="17">A4</text><text transform="matrix(0.4008 0.0009 -0.0557 0.2826 431.3 322.0)" y="17">A5</text><text transform="matrix(0.4008 0.0009 -0.0334 0.2827 471.4 322.1)" y="17">A6</text><text transform="matrix(0.4008 0.0009 -0.0111 0.2828 511.5 322.1)" y="17">A7</text><text transform="matrix(0.4008 0.0009 0.0111 0.2829 551.5 322.2)" y="17">A8</text><text transform="matrix(0.4008 0.0009 0.0334 0.2830 591.6 322.3)" y="17">A1</text><text transform="matrix(0.4008 0.0009 0.0557 0.2831 631.7 322.4)" y="17">A2</text><text transform="matrix(0.4008 0.0009 0.0780 0.2832 671.8 322.5)" y="17">A3</text><text transform="matrix(0.4008 0.0009 0.1003 0.2833 711.9 322.6)" y="17">A4</text><text transform="matrix(0.4008 0.0009 0.1226 0.2834 752.0 322.7)" y="17">A5</text><text transform="matrix(0.4008 0.0009 0.1449 0.2835 792.0 322.8)" y="17">A6</text><text transform="matrix(0.4008 0.0009 0.1672 0.2836 832.1 322.9)" y="17">A7</text><text transform="matrix(0.3797 0.0008 -0.1500 0.2532 246.7 294.8)" y="17">H8</text><text transform="matrix(0.3797 0.0008 -0.1300 0.2533 284.7 294.9)" y="17">H1</text><text transform="matrix(0.3797 0.0008 -0.1100 0.2534 322.6 295.0)" y="17">H2</text><text transform="matrix(0.3797 0.0008 -0.0900 0.2535 360.6 295.0)" y="17">H3</text><text transform="matrix(0.3797 0.0008 -0.0700 0.2536 398.6 295.1)" y="17">H4</text><text transform="matrix(0.3797 0.0008 -0.0500 0.2537 436.6 295.2)" y="17">H5</text><text transform="matrix(0.3797 0.0008 -0.0300 0.2537 474.5 295.3)" y="17">H6</text><text transform="matrix(0.3797 0.0008 -0.0100 0.2538 512.5 295.4)" y="17">H7</text><text transform="matrix(0.3797 0.0008 0.0100 0.2539 550.5 295.4)" y="17">H8</text><text transform="matrix(0.3797 0.0008 0.0300 0.2540 588.5 295.5)" y="17">H1</text><text transform="matrix(0.3797 0.0008 0.0500 0.2541 626.4 295.6)" y="17">H2</text><text transform="matrix(0.3797 0.0008 0.0700 0.2542 664.4 295.7)" y="17">H3</text><text transform="matrix(0.3797 0.0008 0.0900 0.2542 702.4 295.8)" y="17">H4</text><text transform="matrix(0.3797 0.0008 0.1100 0.2543 740.4 295.8)" y="17">H5</text><text transform="matrix(0.3797 0.0008 0.1300 0.2544 778.3 295.9)" y="17">H6</text><text transform="matrix(0.3797 0.0008 0.1500 0.2545 816.3 296.0)" y="17">H7</text><text transform="matrix(0.3607 0.0007 -0.1534 0.2285 224.9 270.7)" y="17">G7</text><text transform="matrix(0.3607 0.0007 -0.1354 0.2285 261.0 270.7)" y="17">G8</text><text transform="matrix(0.3607 0.0007 -0.1173 0.2286 297.0 270.8)" y="17">G1</text><text transform="matrix(0.3607 0.0007 -0.0993 0.2287 333.1 270.9)" y="17">G2</text><text transform="matrix(0.3607 0.0007 -0.0812 0.2288 369.2 271.0)" y="17">G3</text><text transform="matrix(0.3607 0.0007 -0.0632 0.2288 405.2 271.0)" y="17">G4</text><text transform="matrix(0.3607 0.0007 -0.0451 0.2289 441.3 271.1)" y="17">G5</text><text transform="matrix(0.3607 0.0007 -0.0271 0.2290 477.4 271.2)" y="17">G6</text><text transform="matrix(0.3607 0.0007 -0.0090 0.2291 513.5 271.2)" y="17">G7</text><text transform="matrix(0.3607 0.0007 0.0090 0.2291 549.5 271.3)" y="17">G8</text><text transform="matrix(0.3607 0.0007 0.0271 0.2292 585.6 271.4)" y="17">G1</text><text transform="matrix(0.3607 0.0007 0.0451 0.2293 621.7 271.5)" y="17">G2</text><text transform="matrix(0.3607 0.0007 0.0632 0.2293 657.8 271.5)" y="17">G3</text><text transform="matrix(0.3607 0.0007 0.0812 0.2294 693.8 271.6)" y="17">G4</text><text transform="matrix(0.3607 0.0007 0.0993 0.2295 729.9 271.7)" y="17">G5</text><text transform="matrix(0.3607 0.0007 0.1173 0.2296 766.0 271.7)" y="17">G6</text><text transform="matrix(0.3607 0.0007 0.1354 0.2296 802.0 271.8)" y="17">G7</text><text transform="matrix(0.3607 0.0007 0.1534 0.2297 838.1 271.9)" y="17">G8</text><text transform="matrix(0.3435 0.0007 -0.1392 0.2072 239.5 248.9)" y="17">F7</text><text transform="matrix(0.3435 0.0007 -0.1228 0.2073 273.8 249.0)" y="17">F8</text><text transform="matrix(0.3435 0.0007 -0.1064 0.2074 308.2 249.0)" y="17">F1</text><text transform="matrix(0.3435 0.0007 -0.0900 0.2074 342.6 249.1)" y="17">F2</text><text transform="matrix(0.3435 0.0007 -0.0737 0.2075 376.9 249.2)" y="17">F3</text><text transform="matrix(0.3435 0.0007 -0.0573 0.2076 411.3 249.2)" y="17">F4</text><text transform="matrix(0.3435 0.0007 -0.0409 0.2076 445.6 249.3)" y="17">F5</text><text transform="matrix(0.3435 0.0007 -0.0246 0.2077 480.0 249.4)" y="17">F6</text><text transform="matrix(0.3435 0.0007 -0.0082 0.2077 514.3 249.4)" y="17">F7</text><text transform="matrix(0.3435 0.0007 0.0082 0.2078 548.7 249.5)" y="17">F8</text><text transform="matrix(0.3435 0.0007 0.0246 0.2079 583.0 249.6)" y="17">F1</text><text transform="matrix(0.3435 0.0007 0.0409 0.2079 617.4 249.6)" y="17">F2</text><text transform="matrix(0.3435 0.0007 0.0573 0.2080 651.7 249.7)" y="17">F3</text><text transform="matrix(0.3435 0.0007 0.0737 0.2081 686.1 249.8)" y="17">F4</text><text transform="matrix(0.3435 0.0007 0.0900 0.2081 720.4 249.8)" y="17">F5</text><text transform="matrix(0.3435 0.0007 0.1064 0.2082 754.8 249.9)" y="17">F6</text><text transform="matrix(0.3435 0.0007 0.1228 0.2082 789.2 250.0)" y="17">F7</text><text transform="matrix(0.3435 0.0007 0.1392 0.2083 823.5 250.0)" y="17">F8</text><text transform="matrix(0.3279 0.0006 -0.1268 0.1888 252.8 229.1)" y="17">E7</text><text transform="matrix(0.3279 0.0006 -0.1119 0.1889 285.6 229.2)" y="17">E8</text><text transform="matrix(0.3279 0.0006 -0.0970 0.1889 318.4 229.3)" y="17">E1</text><text transform="matrix(0.3279 0.0006 -0.0820 0.1890 351.1 229.3)" y="17">E2</text><text transform="matrix(0.3279 0.0006 -0.0671 0.1891 383.9 229.4)" y="17">E3</text><text transform="matrix(0.3279 0.0006 -0.0522 0.1891 416.7 229.4)" y="17">E4</text><text transform="matrix(0.3279 0.0006 -0.0373 0.1892 449.5 229.5)" y="17">E5</text><text transform="matrix(0.3279 0.0006 -0.0224 0.1892 482.3 229.5)" y="17">E6</text><text transform="matrix(0.3279 0.0006 -0.0075 0.1893 515.1 229.6)" y="17">E7</text><text transform="matrix(0.3279 0.0006 0.0075 0.1893 547.9 229.7)" y="17">E8</text><text transform="matrix(0.3279 0.0006 0.0224 0.1894 580.7 229.7)" y="17">E1</text><text transform="matrix(0.3279 0.0006 0.0373 0.1894 613.5 229.8)" y="17">E2</text><text transform="matrix(0.3279 0.0006 0.0522 0.1895 646.3 229.8)" y="17">E3</text><text transform="matrix(0.3279 0.0006 0.0671 0.1895 679.1 229.9)" y="17">E4</text><text transform="matrix(0.3279 0.0006 0.0820 0.1896 711.9 230.0)" y="17">E5</text><text transform="matrix(0.3279 0.0006 0.0970 0.1897 744.6 230.0)" y="17">E6</text><text transform="matrix(0.3279 0.0006 0.1119 0.1897 777.4 230.1)" y="17">E7</text><text transform="matrix(0.3279 0.0006 0.1268 0.1898 810.2 230.1)" y="17">E8</text><text transform="matrix(0.3137 0.0005 -0.1296 0.1727 233.5 211.0)" y="17">D6</text><text transform="matrix(0.3137 0.0005 -0.1160 0.1728 264.9 211.1)" y="17">D7</text><text transform="matrix(0.3137 0.0005 -0.1024 0.1728 296.3 211.1)" y="17">D8</text><text transform="matrix(0.3137 0.0005 -0.0887 0.1729 327.6 211.2)" y="17">D1</text><text transform="matrix(0.3137 0.0005 -0.0751 0.1729 359.0 211.2)" y="17">D2</text><text transform="matrix(0.3137 0.0005 -0.0614 0.1730 390.4 211.3)" y="17">D3</text><text transform="matrix(0.3137 0.0005 -0.0478 0.1730 421.7 211.3)" y="17">D4</text><text transform="matrix(0.3137 0.0005 -0.0341 0.1731 453.1 211.4)" y="17">D5</text><text transform="matrix(0.3137 0.0005 -0.0205 0.1731 484.5 211.5)" y="17">D6</text><text transform="matrix(0.3137 0.0005 -0.0068 0.1732 515.8 211.5)" y="17">D7</text><text transform="matrix(0.3137 0.0005 0.0068 0.1732 547.2 211.6)" y="17">D8</text><text transform="matrix(0.3137 0.0005 0.0205 0.1733 578.5 211.6)" y="17">D1</text><text transform="matrix(0.3137 0.0005 0.0341 0.1733 609.9 211.7)" y="17">D2</text><text transform="matrix(0.3137 0.0005 0.0478 0.1734 641.3 211.7)" y="17">D3</text><text transform="matrix(0.3137 0.0005 0.0614 0.1734 672.6 211.8)" y="17">D4</text><text transform="matrix(0.3137 0.0005 0.0751 0.1734 704.0 211.8)" y="17">D5</text><text transform="matrix(0.3137 0.0005 0.0887 0.1735 735.4 211.9)" y="17">D6</text><text transform="matrix(0.3137 0.0005 0.1024 0.1735 766.7 211.9)" y="17">D7</text><text transform="matrix(0.3137 0.0005 0.1160 0.1736 798.1 212.0)" y="17">D8</text><text transform="matrix(0.3137 0.0005 0.1296 0.1736 829.5 212.1)" y="17">D1</text><text transform="matrix(0.3006 0.0005 -0.1191 0.1586 246.0 194.5)" y="17">C6</text><text transform="matrix(0.3006 0.0005 -0.1065 0.1587 276.0 194.5)" y="17">C7</text><text transform="matrix(0.3006 0.0005 -0.0940 0.1587 306.1 194.6)" y="17">C8</text><text transform="matrix(0.3006 0.0005 -0.0815 0.1588 336.1 194.6)" y="17">C1</text><text transform="matrix(0.3006 0.0005 -0.0689 0.1588 366.2 194.7)" y="17">C2</text><text transform="matrix(0.3006 0.0005 -0.0564 0.1589 396.2 194.7)" y="17">C3</text><text transform="matrix(0.3006 0.0005 -0.0439 0.1589 426.3 194.8)" y="17">C4</text><text transform="matrix(0.3006 0.0005 -0.0313 0.1589 456.4 194.8)" y="17">C5</text><text transform="matrix(0.3006 0.0005 -0.0188 0.1590 486.4 194.9)" y="17">C6</text><text transform="matrix(0.3006 0.0005 -0.0063 0.1590 516.5 194.9)" y="17">C7</text><text transform="matrix(0.3006 0.0005 0.0063 0.1591 546.5 195.0)" y="17">C8</text><text transform="matrix(0.3006 0.0005 0.0188 0.1591 576.6 195.0)" y="17">C1</text><text transform="matrix(0.3006 0.0005 0.0313 0.1591 606.6 195.1)" y="17">C2</text><text transform="matrix(0.3006 0.0005 0.0439 0.1592 636.7 195.1)" y="17">C3</text><text transform="matrix(0.3006 0.0005 0.0564 0.1592 666.8 195.2)" y="17">C4</text><text transform="matrix(0.3006 0.0005 0.0689 0.1593 696.8 195.2)" y="17">C5</text><text transform="matrix(0.3006 0.0005 0.0815 0.1593 726.9 195.3)" y="17">C6</text><text transform="matrix(0.3006 0.0005 0.0940 0.1594 756.9 195.3)" y="17">C7</text><text transform="matrix(0.3006 0.0005 0.1065 0.1594 787.0 195.4)" y="17">C8</text><text transform="matrix(0.3006 0.0005 0.1191 0.1594 817.0 195.4)" y="17">C1</text><text transform="matrix(0.2885 0.0005 -0.1213 0.1462 228.5 179.2)" y="17">B5</text><text transform="matrix(0.2885 0.0005 -0.1097 0.1462 257.4 179.2)" y="17">B6</text><text transform="matrix(0.2885 0.0005 -0.0982 0.1463 286.2 179.3)" y="17">B7</text><text transform="matrix(0.2885 0.0005 -0.0866 0.1463 315.1 179.3)" y="17">B8</text><text transform="matrix(0.2885 0.0005 -0.0751 0.1463 343.9 179.4)" y="17">B1</text><text transform="matrix(0.2885 0.0005 -0.0635 0.1464 372.8 179.4)" y="17">B2</text><text transform="matrix(0.2885 0.0005 -0.0520 0.1464 401.7 179.5)" y="17">B3</text><text transform="matrix(0.2885 0.0005 -0.0404 0.1464 430.5 179.5)" y="17">B4</text><text transform="matrix(0.2885 0.0005 -0.0289 0.1465 459.4 179.6)" y="17">B5</text><text transform="matrix(0.2885 0.0005 -0.0173 0.1465 488.2 179.6)" y="17">B6</text><text transform="matrix(0.2885 0.0005 -0.0058 0.1465 517.1 179.6)" y="17">B7</text><text transform="matrix(0.2885 0.0005 0.0058 0.1466 545.9 179.7)" y="17">B8</text><text transform="matrix(0.2885 0.0005 0.0173 0.1466 574.8 179.7)" y="17">B1</text><text transform="matrix(0.2885 0.0005 0.0289 0.1467 603.6 179.8)" y="17">B2</text><text transform="matrix(0.2885 0.0005 0.0404 0.1467 632.5 179.8)" y="17">B3</text><text transform="matrix(0.2885 0.0005 0.0520 0.1467 661.3 179.9)" y="17">B4</text><text transform="matrix(0.2885 0.0005 0.0635 0.1468 690.2 179.9)" y="17">B5</text><text transform="matrix(0.2885 0.0005 0.0751 0.1468 719.1 180.0)" y="17">B6</text><text transform="matrix(0.2885 0.0005 0.0866 0.1468 747.9 180.0)" y="17">B7</text><text transform="matrix(0.2885 0.0005 0.0982 0.1469 776.8 180.1)" y="17">B8</text><text transform="matrix(0.2885 0.0005 0.1097 0.1469 805.6 180.1)" y="17">B1</text><text transform="matrix(0.2885 0.0005 0.1213 0.1470 834.5 180.2)" y="17">B2</text><text transform="matrix(0.2774 0.0004 -0.1121 0.1352 240.2 165.1)" y="17">A5</text><text transform="matrix(0.2774 0.0004 -0.1014 0.1352 267.9 165.2)" y="17">A6</text><text transform="matrix(0.2774 0.0004 -0.0908 0.1352 295.7 165.2)" y="17">A7</text><text transform="matrix(0.2774 0.0004 -0.0801 0.1353 323.4 165.3)" y="17">A8</text><text transform="matrix(0.2774 0.0004 -0.0694 0.1353 351.2 165.3)" y="17">A1</text><text transform="matrix(0.2774 0.0004 -0.0587 0.1353 378.9 165.3)" y="17">A2</text><text transform="matrix(0.2774 0.0004 -0.0480 0.1354 406.7 165.4)" y="17">A3</text><text transform="matrix(0.2774 0.0004 -0.0374 0.1354 434.4 165.4)" y="17">A4</text><text transform="matrix(0.2774 0.0004 -0.0267 0.1354 462.1 165.5)" y="17">A5</text><text transform="matrix(0.2774 0.0004 -0.0160 0.1355 489.9 165.5)" y="17">A6</text><text transform="matrix(0.2774 0.0004 -0.0053 0.1355 517.6 165.6)" y="17">A7</text><text transform="matrix(0.2774 0.0004 0.0053 0.1355 545.4 165.6)" y="17">A8</text><text transform="matrix(0.2774 0.0004 0.0160 0.1356 573.1 165.6)" y="17">A1</text><text transform="matrix(0.2774 0.0004 0.0267 0.1356 600.9 165.7)" y="17">A2</text><text transform="matrix(0.2774 0.0004 0.0374 0.1356 628.6 165.7)" y="17">A3</text><text transform="matrix(0.2774 0.0004 0.0480 0.1357 656.3 165.8)" y="17">A4</text><text transform="matrix(0.2774 0.0004 0.0587 0.1357 684.1 165.8)" y="17">A5</text><text transform="matrix(0.2774 0.0004 0.0694 0.1357 711.8 165.9)" y="17">A6</text><text transform="matrix(0.2774 0.0004 0.0801 0.1357 739.6 165.9)" y="17">A7</text><text transform="matrix(0.2774 0.0004 0.0908 0.1358 767.3 165.9)" y="17">A8</text><text transform="matrix(0.2774 0.0004 0.1014 0.1358 795.1 166.0)" y="17">A1</text><text transform="matrix(0.2774 0.0004 0.1121 0.1358 822.8 166.0)" y="17">A2</text><text transform="matrix(0.2672 0.0004 -0.1040 0.1253 251.0 152.1)" y="17">H5</text><text transform="matrix(0.2672 0.0004 -0.0941 0.1254 277.7 152.2)" y="17">H6</text><text transform="matrix(0.2672 0.0004 -0.0842 0.1254 304.4 152.2)" y="17">H7</text><text transform="matrix(0.2672 0.0004 -0.0743 0.1254 331.1 152.2)" y="17">H8</text><text transform="matrix(0.2672 0.0004 -0.0644 0.1255 357.8 152.3)" y="17">H1</text><text transform="matrix(0.2672 0.0004 -0.0545 0.1255 384.6 152.3)" y="17">H2</text><text transform="matrix(0.2672 0.0004 -0.0446 0.1255 411.3 152.4)" y="17">H3</text><text transform="matrix(0.2672 0.0004 -0.0347 0.1255 438.0 152.4)" y="17">H4</text><text transform="matrix(0.2672 0.0004 -0.0248 0.1256 464.7 152.4)" y="17">H5</text><text transform="matrix(0.2672 0.0004 -0.0149 0.1256 491.4 152.5)" y="17">H6</text><text transform="matrix(0.2672 0.0004 -0.0050 0.1256 518.1 152.5)" y="17">H7</text><text transform="matrix(0.2672 0.0004 0.0050 0.1257 544.9 152.6)" y="17">H8</text><text transform="matrix(0.2672 0.0004 0.0149 0.1257 571.6 152.6)" y="17">H1</text><text transform="matrix(0.2672 0.0004 0.0248 0.1257 598.3 152.6)" y="17">H2</text><text transform="matrix(0.2672 0.0004 0.0347 0.1257 625.0 152.7)" y="17">H3</text><text transform="matrix(0.2672 0.0004 0.0446 0.1258 651.7 152.7)" y="17">H4</text><text transform="matrix(0.2672 0.0004 0.0545 0.1258 678.4 152.8)" y="17">H5</text><text transform="matrix(0.2672 0.0004 0.0644 0.1258 705.2 152.8)" y="17">H6</text><text transform="matrix(0.2672 0.0004 0.0743 0.1259 731.9 152.8)" y="17">H7</text><text transform="matrix(0.2672 0.0004 0.0842 0.1259 758.6 152.9)" y="17">H8</text><text transform="matrix(0.2672 0.0004 0.0941 0.1259 785.3 152.9)" y="17">H1</text><text transform="matrix(0.2672 0.0004 0.1040 0.1260 812.0 152.9)" y="17">H2</text><text transform="matrix(0.2576 0.0004 -0.1059 0.1165 235.2 140.0)" y="17">G4</text><text transform="matrix(0.2576 0.0004 -0.0967 0.1165 261.0 140.0)" y="17">G5</text><text transform="matrix(0.2576 0.0004 -0.0875 0.1166 286.8 140.1)" y="17">G6</text><text transform="matrix(0.2576 0.0004 -0.0782 0.1166 312.5 140.1)" y="17">G7</text><text transform="matrix(0.2576 0.0004 -0.0690 0.1166 338.3 140.1)" y="17">G8</text><text transform="matrix(0.2576 0.0004 -0.0598 0.1167 364.1 140.2)" y="17">G1</text><text transform="matrix(0.2576 0.0004 -0.0506 0.1167 389.8 140.2)" y="17">G2</text><text transform="matrix(0.2576 0.0004 -0.0414 0.1167 415.6 140.3)" y="17">G3</text><text transform="matrix(0.2576 0.0004 -0.0322 0.1167 441.3 140.3)" y="17">G4</text><text transform="matrix(0.2576 0.0004 -0.0230 0.1168 467.1 140.3)" y="17">G5</text><text transform="matrix(0.2576 0.0004 -0.0138 0.1168 492.9 140.4)" y="17">G6</text><text transform="matrix(0.2576 0.0004 -0.0046 0.1168 518.6 140.4)" y="17">G7</text><text transform="matrix(0.2576 0.0004 0.0046 0.1168 544.4 140.4)" y="17">G8</text><text transform="matrix(0.2576 0.0004 0.0138 0.1169 570.1 140.5)" y="17">G1</text><text transform="matrix(0.2576 0.0004 0.0230 0.1169 595.9 140.5)" y="17">G2</text><text transform="matrix(0.2576 0.0004 0.0322 0.1169 621.7 140.5)" y="17">G3</text><text transform="matrix(0.2576 0.0004 0.0414 0.1169 647.4 140.6)" y="17">G4</text><text transform="matrix(0.2576 0.0004 0.0506 0.1170 673.2 140.6)" y="17">G5</text><text transform="matrix(0.2576 0.0004 0.0598 0.1170 698.9 140.7)" y="17">G6</text><text transform="matrix(0.2576 0.0004 0.0690 0.1170 724.7 140.7)" y="17">G7</text><text transform="matrix(0.2576 0.0004 0.0782 0.1170 750.5 140.7)" y="17">G8</text><text transform="matrix(0.2576 0.0004 0.0875 0.1171 776.2 140.8)" y="17">G1</text><text transform="matrix(0.2576 0.0004 0.0967 0.1171 802.0 140.8)" y="17">G2</text><text transform="matrix(0.2576 0.0004 0.1059 0.1171 827.8 140.8)" y="17">G3</text><text transform="matrix(0.2487 0.0003 -0.0987 0.1086 245.5 128.7)" y="17">F4</text><text transform="matrix(0.2487 0.0003 -0.0901 0.1087 270.3 128.8)" y="17">F5</text><text transform="matrix(0.2487 0.0003 -0.0815 0.1087 295.2 128.8)" y="17">F6</text><text transform="matrix(0.2487 0.0003 -0.0729 0.1087 320.1 128.9)" y="17">F7</text><text transform="matrix(0.2487 0.0003 -0.0644 0.1087 345.0 128.9)" y="17">F8</text><text transform="matrix(0.2487 0.0003 -0.0558 0.1087 369.8 128.9)" y="17">F1</text><text transform="matrix(0.2487 0.0003 -0.0472 0.1088 394.7 129.0)" y="17">F2</text><text transform="matrix(0.2487 0.0003 -0.0386 0.1088 419.6 129.0)" y="17">F3</text><text transform="matrix(0.2487 0.0003 -0.0300 0.1088 444.4 129.0)" y="17">F4</text><text transform="matrix(0.2487 0.0003 -0.0215 0.1088 469.3 129.1)" y="17">F5</text><text transform="matrix(0.2487 0.0003 -0.0129 0.1089 494.2 129.1)" y="17">F6</text><text transform="matrix(0.2487 0.0003 -0.0043 0.1089 519.1 129.1)" y="17">F7</text><text transform="matrix(0.2487 0.0003 0.0043 0.1089 543.9 129.2)" y="17">F8</text><text transform="matrix(0.2487 0.0003 0.0129 0.1089 568.8 129.2)" y="17">F1</text><text transform="matrix(0.2487 0.0003 0.0215 0.1090 593.7 129.2)" y="17">F2</text><text transform="matrix(0.2487 0.0003 0.0300 0.1090 618.6 129.3)" y="17">F3</text><text transform="matrix(0.2487 0.0003 0.0386 0.1090 643.4 129.3)" y="17">F4</text><text transform="matrix(0.2487 0.0003 0.0472 0.1090 668.3 129.3)" y="17">F5</text><text transform="matrix(0.2487 0.0003 0.0558 0.1091 693.2 129.4)" y="17">F6</text><text transform="matrix(0.2487 0.0003 0.0644 0.1091 718.0 129.4)" y="17">F7</text><text transform="matrix(0.2487 0.0003 0.0729 0.1091 742.9 129.4)" y="17">F8</text><text transform="matrix(0.2487 0.0003 0.0815 0.1091 767.8 129.5)" y="17">F1</text><text transform="matrix(0.2487 0.0003 0.0901 0.1092 792.7 129.5)" y="17">F2</text><text transform="matrix(0.2487 0.0003 0.0987 0.1092 817.5 129.5)" y="17">F3</text><text transform="matrix(0.2404 0.0003 -0.1002 0.1015 231.0 118.2)" y="17">E3</text><text transform="matrix(0.2404 0.0003 -0.0922 0.1015 255.0 118.2)" y="17">E4</text><text transform="matrix(0.2404 0.0003 -0.0842 0.1015 279.0 118.3)" y="17">E5</text><text transform="matrix(0.2404 0.0003 -0.0762 0.1016 303.1 118.3)" y="17">E6</text><text transform="matrix(0.2404 0.0003 -0.0682 0.1016 327.1 118.3)" y="17">E7</text><text transform="matrix(0.2404 0.0003 -0.0601 0.1016 351.2 118.4)" y="17">E8</text><text transform="matrix(0.2404 0.0003 -0.0521 0.1016 375.2 118.4)" y="17">E1</text><text transform="matrix(0.2404 0.0003 -0.0441 0.1016 399.3 118.4)" y="17">E2</text><text transform="matrix(0.2404 0.0003 -0.0361 0.1017 423.3 118.5)" y="17">E3</text><text transform="matrix(0.2404 0.0003 -0.0281 0.1017 447.3 118.5)" y="17">E4</text><text transform="matrix(0.2404 0.0003 -0.0200 0.1017 471.4 118.5)" y="17">E5</text><text transform="matrix(0.2404 0.0003 -0.0120 0.1017 495.4 118.6)" y="17">E6</text><text transform="matrix(0.2404 0.0003 -0.0040 0.1017 519.5 118.6)" y="17">E7</text><text transform="matrix(0.2404 0.0003 0.0040 0.1018 543.5 118.6)" y="17">E8</text><text transform="matrix(0.2404 0.0003 0.0120 0.1018 567.6 118.7)" y="17">E1</text><text transform="matrix(0.2404 0.0003 0.0200 0.1018 591.6 118.7)" y="17">E2</text><text transform="matrix(0.2404 0.0003 0.0281 0.1018 615.7 118.7)" y="17">E3</text><text transform="matrix(0.2404 0.0003 0.0361 0.1019 639.7 118.8)" y="17">E4</text><text transform="matrix(0.2404 0.0003 0.0441 0.1019 663.7 118.8)" y="17">E5</text><text transform="matrix(0.2404 0.0003 0.0521 0.1019 687.8 118.8)" y="17">E6</text><text transform="matrix(0.2404 0.0003 0.0601 0.1019 711.8 118.9)" y="17">E7</text><text transform="matrix(0.2404 0.0003 0.0682 0.1019 735.9 118.9)" y="17">E8</text><text transform="matrix(0.2404 0.0003 0.0762 0.1020 759.9 118.9)" y="17">E1</text><text transform="matrix(0.2404 0.0003 0.0842 0.1020 784.0 119.0)" y="17">E2</text><text transform="matrix(0.2404 0.0003 0.0922 0.1020 808.0 119.0)" y="17">E3</text><text transform="matrix(0.2404 0.0003 0.1002 0.1020 832.0 119.0)" y="17">E4</text><text transform="matrix(0.2327 0.0003 -0.0939 0.0951 240.7 108.4)" y="17">D3</text><text transform="matrix(0.2327 0.0003 -0.0864 0.0951 263.9 108.4)" y="17">D4</text><text transform="matrix(0.2327 0.0003 -0.0788 0.0951 287.2 108.5)" y="17">D5</text><text transform="matrix(0.2327 0.0003 -0.0713 0.0951 310.5 108.5)" y="17">D6</text><text transform="matrix(0.2327 0.0003 -0.0638 0.0951 333.7 108.5)" y="17">D7</text><text transform="matrix(0.2327 0.0003 -0.0563 0.0952 357.0 108.5)" y="17">D8</text><text transform="matrix(0.2327 0.0003 -0.0488 0.0952 380.3 108.6)" y="17">D1</text><text transform="matrix(0.2327 0.0003 -0.0413 0.0952 403.5 108.6)" y="17">D2</text><text transform="matrix(0.2327 0.0003 -0.0338 0.0952 426.8 108.6)" y="17">D3</text><text transform="matrix(0.2327 0.0003 -0.0263 0.0952 450.1 108.7)" y="17">D4</text><text transform="matrix(0.2327 0.0003 -0.0188 0.0952 473.3 108.7)" y="17">D5</text><text transform="matrix(0.2327 0.0003 -0.0113 0.0953 496.6 108.7)" y="17">D6</text><text transform="matrix(0.2327 0.0003 -0.0038 0.0953 519.9 108.8)" y="17">D7</text><text transform="matrix(0.2327 0.0003 0.0038 0.0953 543.1 108.8)" y="17">D8</text><text transform="matrix(0.2327 0.0003 0.0113 0.0953 566.4 108.8)" y="17">D1</text><text transform="matrix(0.2327 0.0003 0.0188 0.0953 589.7 108.8)" y="17">D2</text><text transform="matrix(0.2327 0.0003 0.0263 0.0954 612.9 108.9)" y="17">D3</text><text transform="matrix(0.2327 0.0003 0.0338 0.0954 636.2 108.9)" y="17">D4</text><text transform="matrix(0.2327 0.0003 0.0413 0.0954 659.5 108.9)" y="17">D5</text><text transform="matrix(0.2327 0.0003 0.0488 0.0954 682.7 109.0)" y="17">D6</text><text transform="matrix(0.2327 0.0003 0.0563 0.0954 706.0 109.0)" y="17">D7</text><text transform="matrix(0.2327 0.0003 0.0638 0.0955 729.3 109.0)" y="17">D8</text><text transform="matrix(0.2327 0.0003 0.0713 0.0955 752.5 109.1)" y="17">D1</text><text transform="matrix(0.2327 0.0003 0.0788 0.0955 775.8 109.1)" y="17">D2</text><text transform="matrix(0.2327 0.0003 0.0864 0.0955 799.1 109.1)" y="17">D3</text><text transform="matrix(0.2327 0.0003 0.0939 0.0955 822.3 109.1)" y="17">D4</text><text transform="matrix(0.2254 0.0003 -0.0881 0.0892 249.8 99.2)" y="17">C3</text><text transform="matrix(0.2254 0.0003 -0.0810 0.0892 272.3 99.2)" y="17">C4</text><text transform="matrix(0.2254 0.0003 -0.0740 0.0892 294.8 99.2)" y="17">C5</text><text transform="matrix(0.2254 0.0003 -0.0669 0.0893 317.4 99.3)" y="17">C6</text><text transform="matrix(0.2254 0.0003 -0.0599 0.0893 339.9 99.3)" y="17">C7</text><text transform="matrix(0.2254 0.0003 -0.0529 0.0893 362.5 99.3)" y="17">C8</text><text transform="matrix(0.2254 0.0003 -0.0458 0.0893 385.0 99.4)" y="17">C1</text><text transform="matrix(0.2254 0.0003 -0.0388 0.0893 407.5 99.4)" y="17">C2</text><text transform="matrix(0.2254 0.0003 -0.0317 0.0894 430.1 99.4)" y="17">C3</text><text transform="matrix(0.2254 0.0003 -0.0247 0.0894 452.6 99.4)" y="17">C4</text><text transform="matrix(0.2254 0.0003 -0.0176 0.0894 475.2 99.5)" y="17">C5</text><text transform="matrix(0.2254 0.0003 -0.0106 0.0894 497.7 99.5)" y="17">C6</text><text transform="matrix(0.2254 0.0003 -0.0035 0.0894 520.2 99.5)" y="17">C7</text><text transform="matrix(0.2254 0.0003 0.0035 0.0894 542.8 99.6)" y="17">C8</text><text transform="matrix(0.2254 0.0003 0.0106 0.0895 565.3 99.6)" y="17">C1</text><text transform="matrix(0.2254 0.0003 0.0176 0.0895 587.8 99.6)" y="17">C2</text><text transform="matrix(0.2254 0.0003 0.0247 0.0895 610.4 99.6)" y="17">C3</text><text transform="matrix(0.2254 0.0003 0.0317 0.0895 632.9 99.7)" y="17">C4</text><text transform="matrix(0.2254 0.0003 0.0388 0.0895 655.5 99.7)" y="17">C5</text><text transform="matrix(0.2254 0.0003 0.0458 0.0895 678.0 99.7)" y="17">C6</text><text transform="matrix(0.2254 0.0003 0.0529 0.0896 700.5 99.7)" y="17">C7</text><text transform="matrix(0.2254 0.0003 0.0599 0.0896 723.1 99.8)" y="17">C8</text><text transform="matrix(0.2254 0.0003 0.0669 0.0896 745.6 99.8)" y="17">C1</text><text transform="matrix(0.2254 0.0003 0.0740 0.0896 768.2 99.8)" y="17">C2</text><text transform="matrix(0.2254 0.0003 0.0810 0.0896 790.7 99.9)" y="17">C3</text><text transform="matrix(0.2254 0.0003 0.0881 0.0897 813.2 99.9)" y="17">C4</text></g>
<polygon filter="url(#b4)" fill="#000" opacity="0.200" points="462.5,197.3 497.9,224 537.9,246.7 547.6,267.5 517.6,275.5 445.4,320.1 360.4,379.7 245.7,458.3 249.7,440.3 511.6,253.5"/>
<polygon filter="url(#b3)" fill="#000" opacity="0.240" points="603.3,164.9 526.5,259.4 913.2,557.5 943.2,531.5 528.5,250.4"/>
<g mask="url(#dm1)"><rect x="580" y="340" width="220" height="120" fill="#000" opacity="0.130"/><g transform="rotate(12 682 398)"><rect x="570" y="320" width="240" height="160" fill="url(#brk)"/></g><rect x="580" y="340" width="220" height="120" filter="url(#nz)" opacity="0.380"/></g>
<polygon fill="#dedede" points="183,487.9 249.7,440.3 254.5,444.7 188.6,491.2"/>
<polygon fill="#a9a9a9" points="249.7,440.3 307.6,399 311.5,404.2 254.5,444.7"/>
<polygon fill="#dedede" points="307.6,399 358.4,362.7 361.4,368.5 311.5,404.2"/>
<polygon fill="#a9a9a9" points="358.4,362.7 403.3,330.7 405.5,336.8 361.4,368.5"/>
<polygon fill="#dedede" points="403.3,330.7 443.4,302.1 444.8,308.5 405.5,336.8"/>
<polygon fill="#a9a9a9" points="443.4,302.1 479.2,276.5 480,283 444.8,308.5"/>
<polygon fill="#dedede" points="479.2,276.5 511.6,253.5 511.9,260 480,283"/>
<polygon fill="#e6e6e6" points="105.5,543.1 511.6,253.5 433.5,164.1 -37.4,402.7"/>
<path fill="#b8b8b8" d="M183 487.9 249.7 440.3 230.3 420.3 161.9 466.5ZM230.3 420.3 289.8 380.1 271.8 361 210.8 400ZM191.1 379.6 253.6 341.8 235.4 322.5 171.3 359.1ZM307.6 399 358.4 362.7 341.9 344.9 289.8 380.1ZM271.8 361 325.2 326.9 308.4 308.7 253.6 341.8ZM235.4 322.5 291.5 290.4 274.4 272 216.9 303ZM341.9 344.9 387.9 313.7 372.4 296.7 325.2 326.9ZM308.4 308.7 356.7 279.5 341 262.2 291.5 290.4ZM274.4 272 325.1 244.7 309.1 227.2 257.2 253.5ZM403.3 330.7 443.4 302.1 428.9 286 387.9 313.7ZM372.4 296.7 414.4 269.8 399.7 253.5 356.7 279.5ZM341 262.2 385 237 370.2 220.5 325.1 244.7ZM428.9 286 465.7 261.2 452 245.7 414.4 269.8ZM399.7 253.5 438.2 230.2 424.4 214.5 385 237ZM370.2 220.5 410.5 198.8 396.4 182.9 355.2 203.8ZM479.2 276.5 511.6 253.5 498.8 238.8 465.7 261.2ZM452 245.7 485.9 224 472.9 209.2 438.2 230.2ZM424.4 214.5 459.9 194.3 446.7 179.2 410.5 198.8Z"/>
<g class="lb" fill="#cccccc"><text transform="matrix(-0.2019 -0.2068 0.6746 -0.4685 207.5 452.9)" y="17">B3</text><text transform="matrix(-0.1856 -0.1946 0.5863 -0.4072 270.4 409.2)" y="17">C3</text><text transform="matrix(-0.1872 -0.1962 0.6014 -0.3956 251.7 389.7)" y="17">C4</text><text transform="matrix(-0.1887 -0.1978 0.6168 -0.3838 232.9 370.0)" y="17">C5</text><text transform="matrix(-0.1903 -0.1995 0.6324 -0.3717 214.0 350.1)" y="17">C6</text><text transform="matrix(-0.1717 -0.1837 0.5142 -0.3571 325.2 371.1)" y="17">D3</text><text transform="matrix(-0.1730 -0.1851 0.5272 -0.3468 308.0 352.7)" y="17">D4</text><text transform="matrix(-0.1744 -0.1866 0.5404 -0.3362 290.6 334.1)" y="17">D5</text><text transform="matrix(-0.1758 -0.1881 0.5537 -0.3255 273.1 315.4)" y="17">D6</text><text transform="matrix(-0.1772 -0.1896 0.5673 -0.3146 255.5 296.5)" y="17">D7</text><text transform="matrix(-0.1786 -0.1911 0.5811 -0.3036 237.7 277.4)" y="17">D8</text><text transform="matrix(-0.1597 -0.1740 0.4546 -0.3158 373.6 337.6)" y="17">E3</text><text transform="matrix(-0.1609 -0.1752 0.4659 -0.3065 357.6 320.1)" y="17">E4</text><text transform="matrix(-0.1620 -0.1765 0.4773 -0.2970 341.4 302.5)" y="17">E5</text><text transform="matrix(-0.1632 -0.1779 0.4889 -0.2874 325.1 284.8)" y="17">E6</text><text transform="matrix(-0.1645 -0.1792 0.5007 -0.2777 308.8 266.9)" y="17">E7</text><text transform="matrix(-0.1657 -0.1805 0.5126 -0.2678 292.2 248.9)" y="17">E8</text><text transform="matrix(-0.1492 -0.1652 0.4049 -0.2812 416.5 307.8)" y="17">F3</text><text transform="matrix(-0.1502 -0.1663 0.4147 -0.2728 401.5 291.2)" y="17">F4</text><text transform="matrix(-0.1513 -0.1675 0.4247 -0.2643 386.4 274.5)" y="17">F5</text><text transform="matrix(-0.1523 -0.1687 0.4348 -0.2556 371.2 257.7)" y="17">F6</text><text transform="matrix(-0.1534 -0.1699 0.4451 -0.2469 356.0 240.8)" y="17">F7</text><text transform="matrix(-0.1545 -0.1711 0.4555 -0.2380 340.6 223.7)" y="17">F8</text><text transform="matrix(-0.1400 -0.1573 0.3628 -0.2520 454.8 281.1)" y="17">G3</text><text transform="matrix(-0.1409 -0.1583 0.3715 -0.2444 440.7 265.4)" y="17">G4</text><text transform="matrix(-0.1419 -0.1593 0.3804 -0.2367 426.6 249.5)" y="17">G5</text><text transform="matrix(-0.1428 -0.1604 0.3893 -0.2288 412.4 233.5)" y="17">G6</text><text transform="matrix(-0.1437 -0.1615 0.3983 -0.2209 398.1 217.4)" y="17">G7</text><text transform="matrix(-0.1447 -0.1625 0.4074 -0.2129 383.6 201.2)" y="17">G8</text><text transform="matrix(-0.1318 -0.1500 0.3270 -0.2271 489.2 257.2)" y="17">H3</text><text transform="matrix(-0.1327 -0.1510 0.3348 -0.2202 476.0 242.2)" y="17">H4</text><text transform="matrix(-0.1335 -0.1519 0.3426 -0.2132 462.7 227.0)" y="17">H5</text><text transform="matrix(-0.1343 -0.1529 0.3505 -0.2060 449.3 211.8)" y="17">H6</text><text transform="matrix(-0.1352 -0.1538 0.3585 -0.1988 435.8 196.5)" y="17">H7</text><text transform="matrix(-0.1360 -0.1548 0.3666 -0.1915 422.3 181.0)" y="17">H8</text></g>
<linearGradient id="gg" gradientUnits="userSpaceOnUse" x1="403.3" y1="330.7" x2="364.6" y2="288.1"><stop offset="0" stop-color="#000" stop-opacity="0.120"/><stop offset="1" stop-color="#000" stop-opacity="0"/></linearGradient>
<polygon fill="url(#gg)" points="105.5,543.1 511.6,253.5 433.5,164.1 -37.4,402.7"/>
<polygon fill="#b4b218" points="528.5,250.4 561.5,272.8 561.2,277.2 528.5,253.9"/>
<polygon fill="#dcd924" points="561.5,272.8 598.2,297.6 597.3,302.9 561.2,277.2"/>
<polygon fill="#b4b218" points="598.2,297.6 639.1,325.4 637.4,331.3 597.3,302.9"/>
<polygon fill="#dcd924" points="639.1,325.4 685,356.5 682.1,363 637.4,331.3"/>
<polygon fill="#b4b218" points="685,356.5 736.9,391.7 732.5,398.3 682.1,363"/>
<polygon fill="#dcd924" points="736.9,391.7 796.1,431.8 789.8,438.1 732.5,398.3"/>
<polygon fill="#b4b218" points="796.1,431.8 864.1,477.9 856,483.3 789.8,438.1"/>
<polygon fill="#f3ef2b" points="528.5,250.4 943.2,531.5 1078.3,389.7 603.3,160.9"/>
<path fill="#c6c41c" d="M540.8 235.6 574.6 257.4 587.7 241.9 553.2 220.8ZM565.6 206 600.9 226.3 614.1 210.6 578.1 191ZM590.7 176 627.4 194.9 640.8 179 603.3 160.9ZM561.5 272.8 598.2 297.6 612.1 281.4 574.6 257.4ZM587.7 241.9 626 265.2 640 248.8 600.9 226.3ZM614.1 210.6 654.1 232.3 668.3 215.8 627.4 194.9ZM612.1 281.4 653.9 308.3 668.8 291.2 626 265.2ZM640 248.8 683.7 273.9 698.8 256.6 654.1 232.3ZM668.3 215.8 713.9 239.1 729.1 221.5 682.5 199.1ZM639.1 325.4 685 356.5 700.9 338.5 653.9 308.3ZM668.8 291.2 716.8 320.4 732.8 302.2 683.7 273.9ZM698.8 256.6 749 283.8 765.2 265.4 713.9 239.1ZM700.9 338.5 754 372.6 771.1 353.4 716.8 320.4ZM732.8 302.2 788.4 334.1 805.8 314.7 749 283.8ZM765.2 265.4 823.3 295.1 840.9 275.4 781.5 246.8ZM736.9 391.7 796.1 431.8 814.5 411.5 754 372.6ZM771.1 353.4 833.1 391.1 851.8 370.6 788.4 334.1ZM805.8 314.7 870.7 349.9 889.7 329.1 823.3 295.1ZM814.5 411.5 884.2 456.3 904.5 434.5 833.1 391.1Z"/>
<g class="lb" fill="#d6d327"><text transform="matrix(0.1267 -0.1506 0.3342 0.2205 550.9 253.8)" y="17">A3</text><text transform="matrix(0.1274 -0.1514 0.3414 0.2135 563.6 238.7)" y="17">A4</text><text transform="matrix(0.1280 -0.1521 0.3488 0.2063 576.4 223.5)" y="17">A5</text><text transform="matrix(0.1287 -0.1529 0.3562 0.1991 589.2 208.2)" y="17">A6</text><text transform="matrix(0.1293 -0.1537 0.3637 0.1918 602.1 192.9)" y="17">A7</text><text transform="matrix(0.1300 -0.1545 0.3713 0.1844 615.1 177.5)" y="17">A8</text><text transform="matrix(0.1344 -0.1580 0.3706 0.2446 586.1 277.0)" y="17">B3</text><text transform="matrix(0.1351 -0.1588 0.3788 0.2368 599.6 261.1)" y="17">B4</text><text transform="matrix(0.1359 -0.1597 0.3871 0.2290 613.1 245.2)" y="17">B5</text><text transform="matrix(0.1366 -0.1606 0.3955 0.2210 626.7 229.2)" y="17">B6</text><text transform="matrix(0.1373 -0.1614 0.4039 0.2130 640.4 213.1)" y="17">B7</text><text transform="matrix(0.1381 -0.1623 0.4124 0.2048 654.2 196.9)" y="17">B8</text><text transform="matrix(0.1431 -0.1661 0.4134 0.2729 625.2 302.8)" y="17">C3</text><text transform="matrix(0.1439 -0.1671 0.4227 0.2643 639.6 286.2)" y="17">C4</text><text transform="matrix(0.1447 -0.1680 0.4321 0.2556 654.0 269.4)" y="17">C5</text><text transform="matrix(0.1455 -0.1690 0.4415 0.2468 668.5 252.6)" y="17">C6</text><text transform="matrix(0.1464 -0.1700 0.4511 0.2378 683.1 235.6)" y="17">C7</text><text transform="matrix(0.1472 -0.1709 0.4608 0.2288 697.8 218.6)" y="17">C8</text><text transform="matrix(0.1529 -0.1751 0.4641 0.3063 669.0 331.7)" y="17">D3</text><text transform="matrix(0.1538 -0.1762 0.4747 0.2968 684.4 314.2)" y="17">D4</text><text transform="matrix(0.1548 -0.1772 0.4854 0.2871 699.8 296.5)" y="17">D5</text><text transform="matrix(0.1557 -0.1783 0.4962 0.2773 715.3 278.7)" y="17">D6</text><text transform="matrix(0.1567 -0.1794 0.5071 0.2674 730.9 260.8)" y="17">D7</text><text transform="matrix(0.1576 -0.1805 0.5181 0.2573 746.6 242.8)" y="17">D8</text><text transform="matrix(0.1642 -0.1851 0.5247 0.3463 718.4 364.3)" y="17">E3</text><text transform="matrix(0.1652 -0.1863 0.5369 0.3356 734.8 345.7)" y="17">E4</text><text transform="matrix(0.1663 -0.1875 0.5492 0.3248 751.4 327.0)" y="17">E5</text><text transform="matrix(0.1674 -0.1888 0.5616 0.3139 768.1 308.2)" y="17">E6</text><text transform="matrix(0.1685 -0.1900 0.5742 0.3027 784.9 289.3)" y="17">E7</text><text transform="matrix(0.1696 -0.1912 0.5869 0.2915 801.8 270.2)" y="17">E8</text><text transform="matrix(0.1772 -0.1964 0.5980 0.3947 774.4 401.2)" y="17">F3</text><text transform="matrix(0.1784 -0.1977 0.6121 0.3827 792.1 381.5)" y="17">F4</text><text transform="matrix(0.1796 -0.1991 0.6264 0.3705 810.0 361.7)" y="17">F5</text><text transform="matrix(0.1809 -0.2005 0.6409 0.3582 828.1 341.7)" y="17">F6</text><text transform="matrix(0.1821 -0.2019 0.6555 0.3456 846.2 321.6)" y="17">F7</text><text transform="matrix(0.1924 -0.2090 0.6878 0.4539 838.5 443.6)" y="17">G3</text><text transform="matrix(0.1938 -0.2106 0.7044 0.4404 857.8 422.6)" y="17">G4</text></g>
<linearGradient id="yg" gradientUnits="userSpaceOnUse" x1="639.1" y1="325.4" x2="671.8" y2="287.7"><stop offset="0" stop-color="#000" stop-opacity="0.130"/><stop offset="1" stop-color="#000" stop-opacity="0"/></linearGradient>
<polygon fill="url(#yg)" points="528.5,250.4 943.2,531.5 1078.3,389.7 603.3,160.9"/>
<clipPath id="ytop"><polygon points="528.5,250.4 943.2,531.5 1078.3,389.7 603.3,160.9"/></clipPath>
<g clip-path="url(#ytop)"><g mask="url(#dm2)"><rect x="650" y="320" width="180" height="120" fill="#2a2a00" opacity="0.100"/><g transform="translate(748 378) rotate(-18) skewX(38) translate(-748 -378)"><rect x="540" y="270" width="420" height="220" fill="url(#brk2)"/></g><rect x="650" y="320" width="180" height="120" filter="url(#nz)" opacity="0.180"/></g></g>
<path d="M313.2 413C305.9 414.6 314.1 417.9 318.1 420.3C322.2 422.8 331.1 426 337.7 427.7C344.2 429.3 350.7 429.9 357.2 430.1C363.7 430.3 370.2 430.1 376.7 428.9C383.2 427.7 391 425.4 396.2 422.8C401.5 420.1 414.2 415 408.5 413C402.8 411 377.9 410.6 362.1 410.6C346.2 410.6 320.6 411.4 313.2 413Z" fill="#3cf53c"/>
<path d="M247.3 377.4C248.3 375.7 250.6 373.3 254.6 371.3C258.7 369.2 266 366.6 271.7 365.2C277.4 363.7 281.9 363.2 288.8 362.7C295.7 362.2 301 362.2 313.2 362C325.4 361.8 345.8 360.8 362.1 361.5C378.3 362.2 399.5 364.8 410.9 366.4C422.3 367.9 423.9 369.4 430.4 370.8C436.9 372.2 443.9 373.3 450 374.9C456.1 376.6 462.7 378.5 467.1 380.5C471.4 382.6 474.6 385.4 476.3 387.1C478 388.8 478 389.2 477.3 390.8C476.6 392.4 475.7 394.9 471.9 396.9C468.2 398.9 461.8 401 454.8 403C447.9 405 439.8 407.3 430.4 409.1C421.1 410.9 410.1 412.6 398.7 414C387.3 415.4 374.3 417.2 362.1 417.6C349.9 418.1 335.6 417.4 325.4 416.4C315.3 415.4 309.2 414 301 411.5C292.9 409.1 283.5 405.2 276.6 401.8C269.7 398.3 264.2 394.3 259.5 390.8C254.9 387.3 250.6 383.3 248.5 381C246.5 378.8 246.3 379 247.3 377.4Z" fill="#0a14f0"/>
<path d="M247.3 375.2C248.3 373.5 250.6 371.1 254.6 369.1C258.7 367 266 364.4 271.7 363C277.4 361.5 281.9 361 288.8 360.5C295.7 360 301 360 313.2 359.8C325.4 359.6 345.8 358.6 362.1 359.3C378.3 360 399.5 362.6 410.9 364.2C422.3 365.7 423.9 367.2 430.4 368.6C436.9 370 443.9 371.1 450 372.7C456.1 374.4 462.7 376.3 467.1 378.3C471.4 380.4 474.6 383.2 476.3 384.9C478 386.6 478 387 477.3 388.6C476.6 390.2 475.7 392.7 471.9 394.7C468.2 396.7 461.8 398.8 454.8 400.8C447.9 402.8 439.8 405.1 430.4 406.9C421.1 408.7 410.1 410.4 398.7 411.8C387.3 413.2 374.3 415 362.1 415.4C349.9 415.9 335.6 415.2 325.4 414.2C315.3 413.2 309.2 411.8 301 409.3C292.9 406.9 283.5 403 276.6 399.6C269.7 396.1 264.2 392.1 259.5 388.6C254.9 385.1 250.6 381.1 248.5 378.8C246.5 376.6 246.3 376.8 247.3 375.2Z" fill="#020202"/>
<path d="M303 372C303.2 369.8 304.6 365.3 307.1 361.7C309.7 358.2 313.9 353.8 318.1 350.8C322.4 347.7 327.9 345.1 332.8 343.4C337.7 341.8 341.7 341.2 347.4 341C353.1 340.8 360.4 341.3 367 342.2C373.5 343.1 379.6 344.6 386.5 346.6C393.4 348.6 402.4 351 408.5 353.9C414.6 356.9 419.4 360.8 423.1 364.2C426.8 367.5 429.1 371.6 430.4 373.9C431.7 376.3 434.2 376.5 430.9 378.3C427.7 380.2 418.3 383.3 410.9 384.9C403.5 386.6 394.6 387.5 386.5 388.1C378.3 388.7 370.2 388.8 362.1 388.6C353.9 388.3 345 387.9 337.7 386.6C330.3 385.4 323.4 383.2 318.1 381.3C312.8 379.4 308.4 376.7 305.9 375.2C303.4 373.6 302.8 374.2 303 372Z" fill="url(#domeg)" stroke="#404000" stroke-width="0.300"/>
<path d="M310.3 371C309.6 368.7 311 365.2 312.8 362.2C314.5 359.3 317.2 355.9 320.6 353.4C323.9 351 328.1 349.1 332.8 347.6C337.5 346 346.5 343.9 348.6 344.2C350.8 344.4 348.3 347.2 345.5 349C342.6 350.9 335.2 353.1 331.6 355.4C327.9 357.7 325.5 360.3 323.5 362.7C321.5 365.2 320.6 367.8 319.6 370C318.5 372.3 318.7 376.2 317.1 376.4C315.6 376.5 311 373.4 310.3 371Z" fill="#ffffd0" opacity="0.920"/>
<ellipse cx="276.1" cy="377.6" rx="8.8" ry="5.9" fill="#ff1414" transform="rotate(18 276.1 377.6)"/>
<ellipse cx="312.8" cy="395.9" rx="8.3" ry="5.4" fill="#ff9614" transform="rotate(12 312.8 395.9)"/>
<ellipse cx="347.9" cy="400.8" rx="7.3" ry="4.2" fill="#ffff28" transform="rotate(0 347.9 400.8)"/>
<ellipse cx="386" cy="400.3" rx="7.6" ry="4.2" fill="#28f028" transform="rotate(0 386 400.3)"/>
<ellipse cx="422.4" cy="394" rx="7.1" ry="3.9" fill="#1428ff" transform="rotate(-8 422.4 394)"/>
<ellipse cx="454.4" cy="385.7" rx="7.1" ry="4.2" fill="#c81eff" transform="rotate(-14 454.4 385.7)"/>
<circle cx="355" cy="351.6" r="10.500" fill="#fff" opacity="0.420"/><rect x="349.5" y="346.1" width="11" height="11" fill="#4c4c00" opacity="0.600"/>
<circle cx="716.3" cy="355.3" r="10.500" fill="#fff" opacity="0.420"/><rect x="710.8" y="349.8" width="11" height="11" fill="#4c4c00" opacity="0.600"/>
<circle cx="710" cy="122.700" r="10.800" fill="#fff" opacity="0.400"/>
<circle cx="740" cy="122.700" r="10.800" fill="#fff" opacity="0.400"/>
<circle cx="770" cy="122.700" r="10.800" fill="#fff" opacity="0.400"/>
<circle cx="800" cy="122.700" r="10.800" fill="#fff" opacity="0.400"/>
<path d="M703.500 116.500h13v10h-13z" fill="#f0f0f0" stroke="#7c7c7c" stroke-width="1.600"/><path d="M708 127h4v2h2.500v1.300h-9V129h2.500z" fill="#7c7c7c"/>
<circle cx="740" cy="122.700" r="3.200" fill="#7c7c7c"/>
<path d="M745 122.7L748.6 122.7M743.5 126.2L746.1 128.8M740 127.7L740 131.3M736.5 126.2L733.9 128.8M735 122.7L731.4 122.7M736.5 119.2L733.9 116.6M740 117.7L740 114.1M743.5 119.2L746.1 116.6" stroke="#7c7c7c" stroke-width="1.100"/>
<circle cx="770" cy="122.700" r="3.200" fill="#7c7c7c"/>
<path d="M775 122.7L778.6 122.7M773.5 126.2L776.1 128.8M770 127.7L770 131.3M766.5 126.2L763.9 128.8M765 122.7L761.4 122.7M766.5 119.2L763.9 116.6M770 117.7L770 114.1M773.5 119.2L776.1 116.6" stroke="#7c7c7c" stroke-width="1.100"/>
<path d="M793 117.500h10.500v10.500h-10.500zM803 122.700l4.800-5v10z" fill="#7c7c7c"/>
<text x="253" y="693.5" font-family="Liberation Sans,sans-serif" font-size="14.8" fill="#0a32ff">www.historian.by</text>
</g>
</svg><div class="a" style="left:825px;top:59px;width:195px;height:210px;border:1px solid #4c4c4c;background:#343434;"></div><div class="a" style="left:826px;top:60px;width:193px;height:19px;background:#0a0a0a;"></div><div class="t" style="left:831px;top:63.5px;font-size:12px;color:#8e8e8e;">Объекты</div><svg class="a" style="left:972px;top:68.5px;" width="8" height="4" viewBox="0 0 8 4"><use href="#hdd"/></svg><svg class="a" style="left:988px;top:63.5px;" width="9" height="12" viewBox="0 0 9 12"><use href="#hpin"/></svg><svg class="a" style="left:1003px;top:64.5px;" width="10" height="10" viewBox="0 0 10 10"><use href="#hx"/></svg><svg class="a" style="left:829px;top:84px;" width="16" height="16" viewBox="0 0 16 16"><use href="#wrench"/></svg><svg class="a" style="left:849px;top:83px;" width="17" height="17" viewBox="0 0 17 17"><use href="#link"/></svg><div class="a" style="left:870px;top:83px;width:1px;height:17px;background:#555;"></div><svg class="a" style="left:875px;top:84px;" width="14" height="16" viewBox="0 0 14 16"><use href="#doc"/></svg><svg class="a" style="left:874px;top:84px;" width="17" height="16" viewBox="0 0 17 16"><use href="#pencil"/></svg><svg class="a" style="left:896px;top:85px;" width="17" height="15" viewBox="0 0 17 15"><use href="#wins"/></svg><div class="a" style="left:916px;top:83px;width:1px;height:17px;background:#555;"></div><svg class="a" style="left:921px;top:84px;" width="14" height="16" viewBox="0 0 14 16"><use href="#doc"/></svg><svg class="a" style="left:927px;top:90px;" width="10" height="10" viewBox="0 0 10 10"><use href="#star"/></svg><svg class="a" style="left:943px;top:86px;" width="14" height="14" viewBox="0 0 14 14"><use href="#xg"/></svg><svg class="a" style="left:960px;top:84px;" width="17" height="16" viewBox="0 0 17 16"><use href="#rename"/></svg><svg class="a" style="left:982px;top:84px;" width="15" height="16" viewBox="0 0 15 16"><use href="#copyg"/></svg><div class="a" style="left:826px;top:103px;width:193px;height:1px;background:#4c4c4c;"></div><div class="a" style="left:826px;top:104px;width:175px;height:148px;background:#262626;"></div><div class="a" style="left:826px;top:104px;width:175px;height:18px;background:#3c3c3c;"></div><svg class="a" style="left:833px;top:108px;" width="8" height="8" viewBox="0 0 8 8"><use href="#minus"/></svg><svg class="a" style="left:847px;top:106px;" width="15" height="15" viewBox="0 0 15 15"><use href="#scene"/></svg><div class="t" style="left:866px;top:107px;font-size:11px;color:#f0f0f0;letter-spacing:-0.1px">'Корень' - Scene</div><div class="a" style="left:826px;top:104px;width:175px;height:148px;overflow:hidden"><svg class="a" style="left:39px;top:19px;" width="17" height="16" viewBox="0 0 17 16"><use href="#cam"/></svg><div class="t" style="left:61px;top:21px;font-size:11px;color:#f0f0f0;letter-spacing:-0.28px">Camera Editor - Camera</div><svg class="a" style="left:39px;top:37px;" width="17" height="16" viewBox="0 0 17 16"><use href="#bulb"/></svg><div class="t" style="left:61px;top:39px;font-size:11px;color:#f0f0f0;letter-spacing:-0.28px">Ambient Light - Light</div><svg class="a" style="left:39px;top:55px;" width="17" height="16" viewBox="0 0 17 16"><use href="#bulb"/></svg><div class="t" style="left:61px;top:57px;font-size:11px;color:#f0f0f0;letter-spacing:-0.28px">Light 1 - Light</div><svg class="a" style="left:26px;top:76px;" width="8" height="8" viewBox="0 0 8 8"><use href="#plus"/></svg><svg class="a" style="left:39px;top:73px;" width="17" height="16" viewBox="0 0 17 16"><use href="#pipe"/></svg><div class="t" style="left:61px;top:75px;font-size:11px;color:#f0f0f0;letter-spacing:-0.28px">Rendering Pipeline - Ren</div><svg class="a" style="left:39px;top:91px;" width="17" height="16" viewBox="0 0 17 16"><use href="#pad"/></svg><div class="t" style="left:61px;top:93px;font-size:11px;color:#f0f0f0;letter-spacing:-0.28px">Game Mode - GameMode</div><svg class="a" style="left:26px;top:112px;" width="8" height="8" viewBox="0 0 8 8"><use href="#plus"/></svg><svg class="a" style="left:39px;top:109px;" width="17" height="16" viewBox="0 0 17 16"><use href="#cube"/></svg><div class="t" style="left:61px;top:111px;font-size:11px;color:#f0f0f0;letter-spacing:-0.28px">Ground - MeshInSpace</div><svg class="a" style="left:26px;top:130px;" width="8" height="8" viewBox="0 0 8 8"><use href="#plus"/></svg><svg class="a" style="left:39px;top:127px;" width="17" height="16" viewBox="0 0 17 16"><use href="#cube"/></svg><div class="t" style="left:61px;top:129px;font-size:11px;color:#f0f0f0;letter-spacing:-0.28px">Box 2 - MeshInSpace</div><svg class="a" style="left:39px;top:145px;" width="17" height="16" viewBox="0 0 17 16"><use href="#cube"/></svg></div><div class="a" style="left:1001px;top:104px;width:17px;height:164px;background:#2f2f2f;"></div><svg class="a" style="left:1005px;top:108px;" width="10" height="8" viewBox="0 0 10 8"><use href="#chevU"/></svg><div class="a" style="left:1002px;top:120px;width:16px;height:52px;background:#3c3c3c;"></div><svg class="a" style="left:1005px;top:241px;" width="10" height="8" viewBox="0 0 10 8"><use href="#chevD"/></svg><div class="a" style="left:826px;top:252px;width:175px;height:16px;background:#2f2f2f;"></div><div class="a" style="left:842px;top:252px;width:73px;height:16px;background:#3c3c3c;"></div><svg class="a" style="left:830px;top:255px;" width="8" height="10" viewBox="0 0 8 10"><use href="#chevL"/></svg><svg class="a" style="left:988px;top:255px;" width="8" height="10" viewBox="0 0 8 10"><use href="#chevR"/></svg><div class="a" style="left:825px;top:274px;width:195px;height:427px;border:1px solid #4c4c4c;background:#353535;"></div><div class="a" style="left:826px;top:275px;width:193px;height:19px;background:#0a0a0a;"></div><div class="t" style="left:831px;top:278.5px;font-size:12px;color:#8e8e8e;">Настройки</div><svg class="a" style="left:972px;top:283.5px;" width="8" height="4" viewBox="0 0 8 4"><use href="#hdd"/></svg><svg class="a" style="left:988px;top:278.5px;" width="9" height="12" viewBox="0 0 9 12"><use href="#hpin"/></svg><svg class="a" style="left:1003px;top:279.5px;" width="10" height="10" viewBox="0 0 10 10"><use href="#hx"/></svg><div class="t" style="left:832px;top:301px;font-size:12px;color:#f4f4f4;font-weight:bold">Scene</div><svg class="a" style="left:998px;top:298px;" width="17" height="17" viewBox="0 0 17 17"><use href="#link"/></svg><div class="t" style="left:832px;top:322px;font-size:11.5px;color:#f0f0f0;">Scene</div><div class="a" style="left:829px;top:341px;width:19px;height:21px;background:#555;"></div><svg class="a" style="left:831px;top:344px" width="16" height="15" viewBox="0 0 16 15"><rect x="0.500" y="2.500" width="14" height="11" fill="#f4f4f4" stroke="#4a90d8"/><rect x="0.500" y="2.500" width="14" height="3" fill="#4a90d8"/><path d="M3 8h7M3 10h7M3 12h7" stroke="#888" stroke-width="0.800"/><path d="M6 3l6-3 4 3-5 4z" fill="#e8b070" stroke="#b07838" stroke-width="0.500"/></svg><svg class="a" style="left:853px;top:344px" width="12" height="16" viewBox="0 0 12 16"><path d="M5 0h6l-3.500 5.500h4l-8.500 10.500 2.500-7.500h-4z" fill="#f4c820" stroke="#c89810" stroke-width="0.500"/></svg><div class="a" style="left:828px;top:365px;width:174px;height:17px;background:#2b2b2b;"></div><div class="t" style="left:831px;top:367px;font-size:11.5px;color:#b4b4b4;">Компонент</div><div class="a" style="left:906px;top:382px;width:6px;height:269px;background:#2f2f2f;"></div><div class="a" style="left:1002px;top:365px;width:16px;height:286px;background:#2f2f2f;"></div><svg class="a" style="left:1005px;top:367px;" width="10" height="8" viewBox="0 0 10 8"><use href="#chevU"/></svg><div class="a" style="left:1003px;top:378px;width:15px;height:45px;background:#3c3c3c;"></div><svg class="a" style="left:1005px;top:640px;" width="10" height="8" viewBox="0 0 10 8"><use href="#chevD"/></svg><div class="t" style="left:847px;top:389px;font-size:11px;color:#f0f0f0;letter-spacing:-0.15px">Включено</div><div class="a" style="left:952px;top:388px;width:13px;height:13px;border:1px solid #9a9a9a;background:#2a2a2a;"></div><svg class="a" style="left:953px;top:389px" width="11" height="11" viewBox="0 0 11 11"><path d="M1.500 5.500l3 3 5-6.500" stroke="#fff" stroke-width="2" fill="none"/></svg><div class="t" style="left:847px;top:412px;font-size:11px;color:#f0f0f0;letter-spacing:-0.15px">Name</div><div class="a" style="left:951px;top:409px;width:49px;height:18px;border:1px solid #686868;background:#2a2a2a;"></div><div class="t" style="left:847px;top:435px;font-size:11px;color:#f0f0f0;letter-spacing:-0.15px">Screen L...</div><div class="a" style="left:926px;top:432px;width:22px;height:18px;border:1px solid #585858;background:#383838;"></div><div class="a" style="left:951px;top:432px;width:49px;height:18px;border:1px solid #686868;background:#383838;"></div><div class="t" style="left:956px;top:435px;font-size:11px;color:#f0f0f0;letter-spacing:-0.2px">Auto</div><svg class="a" style="left:987px;top:439px;" width="8" height="4" viewBox="0 0 8 4"><use href="#hdd"/></svg><div class="t" style="left:847px;top:458px;font-size:11px;color:#f0f0f0;letter-spacing:-0.15px">Network ...</div><div class="a" style="left:926px;top:455px;width:22px;height:18px;border:1px solid #585858;background:#383838;"></div><div class="a" style="left:951px;top:455px;width:49px;height:18px;border:1px solid #686868;background:#383838;"></div><div class="t" style="left:956px;top:458px;font-size:11px;color:#f0f0f0;letter-spacing:-0.2px">True</div><svg class="a" style="left:987px;top:462px;" width="8" height="4" viewBox="0 0 8 4"><use href="#hdd"/></svg><div class="a" style="left:828px;top:477px;width:174px;height:18px;background:#2b2b2b;"></div><div class="t" style="left:831px;top:480px;font-size:11.5px;color:#b4b4b4;">Сцена</div><div class="t" style="left:847px;top:501px;font-size:11px;color:#f0f0f0;letter-spacing:-0.15px">Renderin...</div><div class="a" style="left:916px;top:504px;width:5px;height:5px;border-radius:3px;background:#787878"></div><div class="a" style="left:926px;top:498px;width:22px;height:18px;border:1px solid #585858;background:#383838;"></div><svg class="a" style="left:934px;top:503px" width="6" height="8" viewBox="0 0 6 8"><path d="M0 0l6 4-6 4z" fill="#b8b8b8"/></svg><div class="t" style="left:955px;top:502px;font-size:11px;color:#f0f0f0;letter-spacing:-0.1px">Renderir</div><svg class="a" style="left:830px;top:523px" width="14" height="14" viewBox="0 0 14 14"><rect x="0.500" y="0.500" width="13" height="13" fill="#383838" stroke="#585858"/><path d="M4.500 7h5M7 4.500v5" stroke="#d0d0d0"/></svg><div class="t" style="left:847px;top:524px;font-size:11px;color:#f0f0f0;letter-spacing:-0.15px">Backgro...</div><div class="a" style="left:926px;top:521px;width:22px;height:18px;border:1px solid #585858;background:#383838;"></div><div class="a" style="left:951px;top:521px;width:28px;height:18px;border:1px solid #686868;background:#2a2a2a;"></div><div class="t" style="left:955px;top:524px;font-size:11px;color:#f0f0f0;">1 1</div><div class="a" style="left:981px;top:521px;width:19px;height:18px;border:1px solid #686868;background:#ffffff;"></div><div class="t" style="left:847px;top:547px;font-size:11px;color:#f0f0f0;letter-spacing:-0.15px">Backgro...</div><div class="a" style="left:926px;top:544px;width:22px;height:18px;border:1px solid #585858;background:#383838;"></div><div class="a" style="left:951px;top:544px;width:49px;height:18px;border:1px solid #686868;background:#2a2a2a;"></div><div class="t" style="left:956px;top:547px;font-size:11px;color:#f0f0f0;">1</div><div class="t" style="left:847px;top:570px;font-size:11px;color:#f0f0f0;letter-spacing:-0.15px">UI Screen</div><div class="a" style="left:926px;top:567px;width:22px;height:18px;border:1px solid #585858;background:#383838;"></div><div class="t" style="left:955px;top:571px;font-size:11px;color:#f0f0f0;letter-spacing:-0.2px">(Null)</div><div class="t" style="left:847px;top:593px;font-size:11px;color:#f0f0f0;letter-spacing:-0.15px">Mode</div><div class="a" style="left:926px;top:590px;width:22px;height:18px;border:1px solid #585858;background:#383838;"></div><div class="a" style="left:951px;top:590px;width:49px;height:18px;border:1px solid #686868;background:#383838;"></div><div class="t" style="left:956px;top:593px;font-size:11px;color:#f0f0f0;letter-spacing:-0.2px">3D</div><svg class="a" style="left:987px;top:597px;" width="8" height="4" viewBox="0 0 8 4"><use href="#hdd"/></svg><div class="t" style="left:847px;top:616px;font-size:11px;color:#f0f0f0;letter-spacing:-0.15px">Screen ...</div><div class="a" style="left:926px;top:613px;width:22px;height:18px;border:1px solid #585858;background:#383838;"></div><div class="a" style="left:951px;top:613px;width:49px;height:18px;border:1px solid #686868;background:#383838;"></div><div class="t" style="left:956px;top:616px;font-size:11px;color:#f0f0f0;letter-spacing:-0.2px">Un...</div><svg class="a" style="left:987px;top:620px;" width="8" height="4" viewBox="0 0 8 4"><use href="#hdd"/></svg><div class="t" style="left:847px;top:639px;font-size:11px;color:#f0f0f0;letter-spacing:-0.15px">Camera ...</div><div class="a" style="left:916px;top:642px;width:5px;height:5px;border-radius:3px;background:#787878"></div><div class="a" style="left:926px;top:636px;width:22px;height:18px;border:1px solid #585858;background:#383838;"></div><svg class="a" style="left:934px;top:641px" width="6" height="8" viewBox="0 0 6 8"><path d="M0 0l6 4-6 4z" fill="#b8b8b8"/></svg><div class="t" style="left:954px;top:640px;font-size:11px;color:#f0f0f0;letter-spacing:-0.1px">Camera</div><div class="a" style="left:994px;top:638px;width:1px;height:13px;background:#3a6ab0;"></div><div class="a" style="left:826px;top:651px;width:193px;height:49px;background:#353535;"></div><div class="a" style="left:833px;top:659px;width:93px;height:26px;border:1px solid #626262;background:#3c3c3c;"></div><div class="t" style="left:832px;top:666px;font-size:11.5px;color:#f0f0f0;width:93px;text-align:center;letter-spacing:-0.2px">Info</div></body></html>
